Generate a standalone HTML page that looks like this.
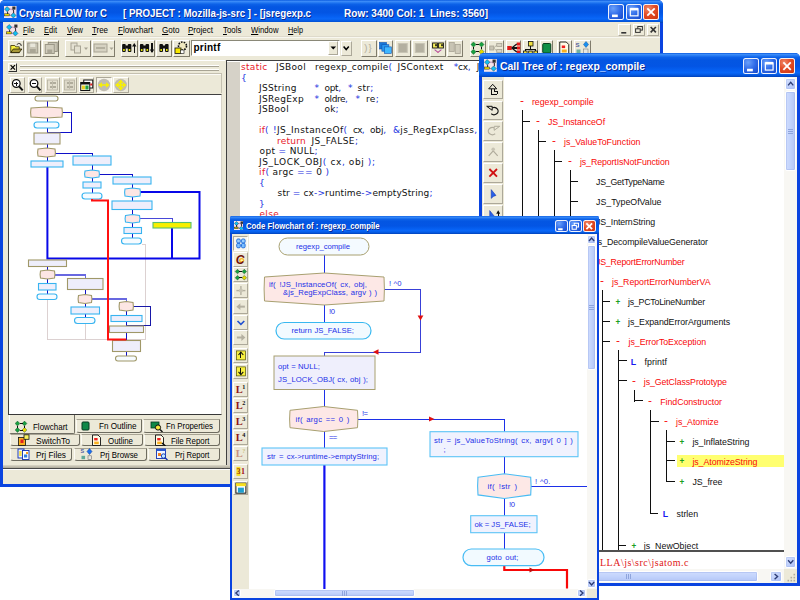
<!DOCTYPE html>
<html><head><meta charset="utf-8"><title>Crystal FLOW for C</title>
<style>
html,body{margin:0;padding:0;background:#fff;}
body{width:800px;height:600px;position:relative;overflow:hidden;font-family:"Liberation Sans",Arial,sans-serif;}
div,span,svg{position:absolute;}
div{box-sizing:border-box;}
span{white-space:pre;}
u{text-decoration:underline;}
</style></head><body>
<div style="left:0px;top:0px;width:663px;height:487px;overflow:hidden;border-radius:5px 5px 0 0;background:#0a44e0;">
<div style="left:0px;top:0px;width:663px;height:22.5px;background:linear-gradient(to bottom,#0a5be0 0%,#3c8cf8 6%,#2a7ef4 10%,#0d62e8 18%,#0456e2 30%,#0355e4 55%,#0660f2 72%,#0a68f8 82%,#0458e0 92%,#0242b8 100%);"></div>
<div style="left:3px;top:22px;width:657px;height:462.2px;background:#ece9d8;"></div>
<svg style="left:4.3px;top:5.8px" width="12.5" height="12.5" viewBox="4.3 5.8 12.5 12.5">
<rect x="4.3" y="5.8" width="12.5" height="12.5" fill="#f4e4ea"/>
<circle cx="11.07" cy="12.05" r="3.12" fill="none" stroke="#c8a0c0" stroke-width="1.2"/>
<polygon points="7.42,6.32 10.03,8.93 7.42,11.53 4.82,8.93" fill="#10c0f0" stroke="#204060" stroke-width="0.5"/>
<polygon points="13.68,12.57 16.28,15.18 13.68,17.78 11.07,15.18" fill="#10c0f0" stroke="#204060" stroke-width="0.5"/>
<rect x="4.82" y="13.61" width="4.69" height="2.08" fill="#f0e000" stroke="#202020" stroke-width="0.5"/>
<rect x="12.63" y="6.32" width="3.12" height="3.12" fill="#303030"/>
<polyline points="7.42,11.53 7.42,13.61" fill="none" stroke="#202020" stroke-width="0.8"  shape-rendering="crispEdges"/>
<polyline points="14.2,9.45 14.2,12.57" fill="none" stroke="#202020" stroke-width="0.8"  shape-rendering="crispEdges"/>
</svg>
<span id="t1" style="left:19px;top:5.8px;font:bold 10.7px/14px 'Liberation Sans',Arial,sans-serif;color:#fff;transform:scaleX(0.8927);transform-origin:0 50%;text-shadow:1px 1px 0 #0a2890;">Crystal FLOW for C</span>
<span id="t2" style="left:122.5px;top:5.8px;font:bold 10.7px/14px 'Liberation Sans',Arial,sans-serif;color:#fff;transform:scaleX(0.9097);transform-origin:0 50%;text-shadow:1px 1px 0 #0a2890;">[ PROJECT : Mozilla-js-src ] - [jsregexp.c</span>
<span id="t3" style="left:344px;top:5.8px;font:bold 10.7px/14px 'Liberation Sans',Arial,sans-serif;color:#fff;transform:scaleX(0.9396);transform-origin:0 50%;text-shadow:1px 1px 0 #0a2890;">Row: 3400 Col: 1  Lines: 3560]</span>
<div style="left:608px;top:4px;width:16px;height:16px;background:radial-gradient(circle at 30% 25%,#6aa0fa 0%,#2f6ae8 50%,#1848c8 100%);border:1px solid rgba(255,255,255,0.92);border-radius:2.5px;"></div>
<svg style="left:608px;top:4px" width="16" height="16" viewBox="608 4 16 16">
<rect x="612" y="14.56" width="5.76" height="2.56" fill="#fff"/>
</svg>
<div style="left:625.5px;top:4px;width:16px;height:16px;background:radial-gradient(circle at 30% 25%,#6aa0fa 0%,#2f6ae8 50%,#1848c8 100%);border:1px solid rgba(255,255,255,0.92);border-radius:2.5px;"></div>
<svg style="left:625.5px;top:4px" width="16" height="16" viewBox="625.5 4 16 16">
<rect x="629.82" y="8.8" width="7.68" height="7.04" fill="none" stroke="#fff" stroke-width="1.2"/>
<rect x="629.82" y="7.84" width="7.68" height="2.56" fill="#fff"/>
</svg>
<div style="left:643px;top:4px;width:16px;height:16px;background:radial-gradient(circle at 30% 25%,#f08868 0%,#e24c26 45%,#cc340e 100%);border:1px solid rgba(255,255,255,0.92);border-radius:2.5px;"></div>
<svg style="left:643px;top:4px" width="16" height="16" viewBox="643 4 16 16">
<polyline points="647.32,8.32 654.68,15.68" fill="none" stroke="#fff" stroke-width="1.8" />
<polyline points="654.68,8.32 647.32,15.68" fill="none" stroke="#fff" stroke-width="1.8" />
</svg>
<svg style="left:6px;top:23.5px" width="12.5" height="12.5" viewBox="6 23.5 12.5 12.5">
<rect x="6" y="23.5" width="12.5" height="12.5" fill="#f4e4ea"/>
<circle cx="12.77" cy="29.75" r="3.12" fill="none" stroke="#c8a0c0" stroke-width="1.2"/>
<polygon points="9.12,24.02 11.73,26.62 9.12,29.23 6.52,26.62" fill="#10c0f0" stroke="#204060" stroke-width="0.5"/>
<polygon points="15.38,30.27 17.98,32.88 15.38,35.48 12.77,32.88" fill="#10c0f0" stroke="#204060" stroke-width="0.5"/>
<rect x="6.52" y="31.31" width="4.69" height="2.08" fill="#f0e000" stroke="#202020" stroke-width="0.5"/>
<rect x="14.33" y="24.02" width="3.12" height="3.12" fill="#303030"/>
<polyline points="9.12,29.23 9.12,31.31" fill="none" stroke="#202020" stroke-width="0.8"  shape-rendering="crispEdges"/>
<polyline points="15.9,27.15 15.9,30.27" fill="none" stroke="#202020" stroke-width="0.8"  shape-rendering="crispEdges"/>
</svg>
<span id="t4" style="left:23px;top:23.5px;font:normal 9.2px/12px 'Liberation Sans',Arial,sans-serif;color:#000;transform:scaleX(0.7756);transform-origin:0 50%;"><u>F</u>ile</span>
<span id="t5" style="left:44px;top:23.5px;font:normal 9.2px/12px 'Liberation Sans',Arial,sans-serif;color:#000;transform:scaleX(0.8197);transform-origin:0 50%;"><u>E</u>dit</span>
<span id="t6" style="left:66.5px;top:23.5px;font:normal 9.2px/12px 'Liberation Sans',Arial,sans-serif;color:#000;transform:scaleX(0.8095);transform-origin:0 50%;"><u>V</u>iew</span>
<span id="t7" style="left:92px;top:23.5px;font:normal 9.2px/12px 'Liberation Sans',Arial,sans-serif;color:#000;transform:scaleX(0.8620);transform-origin:0 50%;"><u>T</u>ree</span>
<span id="t8" style="left:117.5px;top:23.5px;font:normal 9.2px/12px 'Liberation Sans',Arial,sans-serif;color:#000;transform:scaleX(0.8784);transform-origin:0 50%;"><u>F</u>lowchart</span>
<span id="t9" style="left:161.5px;top:23.5px;font:normal 9.2px/12px 'Liberation Sans',Arial,sans-serif;color:#000;transform:scaleX(0.8777);transform-origin:0 50%;"><u>G</u>oto</span>
<span id="t10" style="left:187.5px;top:23.5px;font:normal 9.2px/12px 'Liberation Sans',Arial,sans-serif;color:#000;transform:scaleX(0.8738);transform-origin:0 50%;"><u>P</u>roject</span>
<span id="t11" style="left:222.5px;top:23.5px;font:normal 9.2px/12px 'Liberation Sans',Arial,sans-serif;color:#000;transform:scaleX(0.8530);transform-origin:0 50%;"><u>T</u>ools</span>
<span id="t12" style="left:250.5px;top:23.5px;font:normal 9.2px/12px 'Liberation Sans',Arial,sans-serif;color:#000;transform:scaleX(0.8413);transform-origin:0 50%;"><u>W</u>indow</span>
<span id="t13" style="left:288px;top:23.5px;font:normal 9.2px/12px 'Liberation Sans',Arial,sans-serif;color:#000;transform:scaleX(0.7934);transform-origin:0 50%;"><u>H</u>elp</span>
<div style="left:618px;top:24px;width:12.5px;height:11.5px;background:#ece9d8;border:1px solid;border-color:#fff #aca899 #aca899 #fff;"></div>
<svg style="left:618px;top:24px" width="12.5" height="11.5" viewBox="618 24 12.5 11.5">
<rect x="621.25" y="32" width="5" height="1.6" fill="#333"/>
</svg>
<div style="left:632.5px;top:24px;width:12px;height:11.5px;background:#ece9d8;border:1px solid;border-color:#fff #aca899 #aca899 #fff;"></div>
<svg style="left:632.5px;top:24px" width="12" height="11.5" viewBox="632.5 24 12 11.5">
<rect x="637.3" y="26.5" width="4.6" height="3.6" fill="none" stroke="#333" stroke-width="1"/>
<rect x="635.1" y="28.8" width="4.6" height="3.6" fill="#ece9d8" stroke="#333" stroke-width="1"/>
</svg>
<div style="left:646.5px;top:24px;width:12.5px;height:11.5px;background:#ece9d8;border:1px solid;border-color:#fff #aca899 #aca899 #fff;"></div>
<svg style="left:646.5px;top:24px" width="12.5" height="11.5" viewBox="646.5 24 12.5 11.5">
<polyline points="650.15,27 655.35,32.4" fill="none" stroke="#333" stroke-width="1.6" />
<polyline points="655.35,27 650.15,32.4" fill="none" stroke="#333" stroke-width="1.6" />
</svg>
<div style="left:3px;top:36.4px;width:657px;height:1px;background:#dedacb;"></div>
<div style="left:3px;top:37.2px;width:657px;height:1px;background:#f8f7f0;"></div>
<div style="left:7.5px;top:39.8px;width:16.5px;height:17px;background:#ece9d8;border:1px solid;border-color:#fff #807c6c #807c6c #fff;"></div>
<svg style="left:7.5px;top:39px" width="16.5" height="18" viewBox="7.5 39 16.5 18">
<polygon points="10.25,45.5 14.25,45.5 15.25,46.8 18.75,46.8 18.75,52.6 10.25,52.6" fill="#f8f040" stroke="#302800" stroke-width="0.8"/>
<polygon points="10.25,52.6 12.75,49 21.35,49 18.75,52.6" fill="#a89838" stroke="#201800" stroke-width="0.8"/>
<polyline points="16.25,44.6 18.25,43.4 20.25,44 20.75,46" fill="none" stroke="#202020" stroke-width="0.9" />
</svg>
<div style="left:25px;top:39.8px;width:15.5px;height:17px;background:#ece9d8;border:1px solid;border-color:#fff #807c6c #807c6c #fff;"></div>
<svg style="left:25px;top:39px" width="15.5" height="18" viewBox="25 39 15.5 18">
<rect x="27.75" y="43" width="10" height="10" fill="#c8c4b4" stroke="#9c9888" stroke-width="1"/>
<rect x="30.25" y="43.5" width="5" height="3.5" fill="#e8e6da"/>
<rect x="29.75" y="49" width="6" height="4" fill="#aaa696"/>
</svg>
<div style="left:41.5px;top:39.8px;width:17.5px;height:17px;background:#ece9d8;border:1px solid;border-color:#fff #807c6c #807c6c #fff;"></div>
<svg style="left:41.5px;top:39px" width="17.5" height="18" viewBox="41.5 39 17.5 18">
<rect x="47.75" y="42.5" width="9" height="9" fill="#c8c4b4" stroke="#9c9888" stroke-width="1"/>
<rect x="44.75" y="44.5" width="9" height="9" fill="#d0ccbc" stroke="#9c9888" stroke-width="1"/>
<rect x="46.75" y="49.5" width="5" height="4" fill="#aaa696"/>
</svg>
<div style="left:64.5px;top:39.8px;width:26px;height:17px;background:#ece9d8;border:1px solid;border-color:#fff #807c6c #807c6c #fff;"></div>
<svg style="left:64.5px;top:39px" width="26" height="18" viewBox="64.5 39 26 18">
<rect x="70.5" y="43" width="6" height="7" fill="#e4e1d2" stroke="#a8a494" stroke-width="1"/>
<rect x="74" y="46" width="6" height="7" fill="#e4e1d2" stroke="#a8a494" stroke-width="1"/>
<polygon points="83.5,47.5 87.5,47.5 85.5,50" fill="#a8a494" />
</svg>
<div style="left:91.5px;top:39.8px;width:23px;height:17px;background:#ece9d8;border:1px solid;border-color:#fff #807c6c #807c6c #fff;"></div>
<svg style="left:91.5px;top:39px" width="23" height="18" viewBox="91.5 39 23 18">
<rect x="93.5" y="44" width="13" height="8" fill="#d6d2c2" stroke="#a8a494" stroke-width="1"/>
<polyline points="95.5,48 104.5,48" fill="none" stroke="#a8a494" stroke-width="1.5" />
<polygon points="109,47.5 113,47.5 111,50" fill="#a8a494" />
</svg>
<div style="left:121px;top:39.8px;width:16.5px;height:17px;background:#ece9d8;border:1px solid;border-color:#fff #807c6c #807c6c #fff;"></div>
<svg style="left:121px;top:39px" width="16.5" height="18" viewBox="121 39 16.5 18">
<rect x="122.15" y="44" width="3.6" height="8" rx="1" fill="#101010"/>
<rect x="127.75" y="44" width="3.6" height="8" rx="1" fill="#101010"/>
<rect x="125.25" y="45.5" width="3" height="3" fill="#101010"/>
<rect x="123.15" y="49" width="1.6" height="2" fill="#e0e000"/>
<rect x="128.75" y="49" width="1.6" height="2" fill="#e0e000"/>
<polyline points="134.25,53 134.25,44" fill="none" stroke="#101010" stroke-width="1.2"  shape-rendering="crispEdges"/>
<polygon points="132.05,46.5 134.25,43 136.45,46.5" fill="#101010" />
</svg>
<div style="left:138.5px;top:39.8px;width:16px;height:17px;background:#ece9d8;border:1px solid;border-color:#fff #807c6c #807c6c #fff;"></div>
<svg style="left:138.5px;top:39px" width="16" height="18" viewBox="138.5 39 16 18">
<rect x="139.4" y="44" width="3.6" height="8" rx="1" fill="#101010"/>
<rect x="145" y="44" width="3.6" height="8" rx="1" fill="#101010"/>
<rect x="142.5" y="45.5" width="3" height="3" fill="#101010"/>
<rect x="140.4" y="49" width="1.6" height="2" fill="#e0e000"/>
<rect x="146" y="49" width="1.6" height="2" fill="#e0e000"/>
<polyline points="151.5,43 151.5,52" fill="none" stroke="#101010" stroke-width="1.2"  shape-rendering="crispEdges"/>
<polygon points="149.3,49.5 151.5,53 153.7,49.5" fill="#101010" />
</svg>
<div style="left:155.5px;top:39.8px;width:16px;height:17px;background:#ece9d8;border:1px solid;border-color:#fff #807c6c #807c6c #fff;"></div>
<svg style="left:155.5px;top:39px" width="16" height="18" viewBox="155.5 39 16 18">
<rect x="158.9" y="44" width="3.6" height="8" rx="1" fill="#101010"/>
<rect x="164.5" y="44" width="3.6" height="8" rx="1" fill="#101010"/>
<rect x="162" y="45.5" width="3" height="3" fill="#101010"/>
<rect x="159.9" y="49" width="1.6" height="2" fill="#e0e000"/>
<rect x="165.5" y="49" width="1.6" height="2" fill="#e0e000"/>
</svg>
<div style="left:172.5px;top:39.8px;width:17px;height:17px;background:#ece9d8;border:1px solid;border-color:#fff #807c6c #807c6c #fff;"></div>
<svg style="left:172.5px;top:39px" width="17" height="18" viewBox="172.5 39 17 18">
<circle cx="182" cy="46" r="4" fill="#f0e8c0" stroke="#101010" stroke-width="1.6" stroke-dasharray="1.6 1.2"/>
<rect x="174.5" y="48" width="6" height="5.5" fill="#f8e800" stroke="#101010" stroke-width="0.8"/>
<rect x="180" y="50" width="3.5" height="3.5" fill="#fff" stroke="#101010" stroke-width="0.6"/>
</svg>
<div style="left:191px;top:39.5px;width:148.5px;height:16.5px;background:#fff;border:1px solid;border-color:#8a8878 #fff #fff #8a8878;"></div>
<span id="t14" style="left:193.5px;top:41.3px;font:bold 10px/13px 'Liberation Sans',Arial,sans-serif;color:#000;letter-spacing:0.24px;">printf</span>
<div style="left:327.5px;top:41px;width:10.5px;height:13.5px;background:#ece9d8;border:1px solid;border-color:#fff #aca899 #aca899 #fff;"></div>
<svg style="left:327.5px;top:41px" width="11" height="14" viewBox="327.5 41 11 14">
<polygon points="330,46.5 335.6,46.5 332.8,49.6" fill="#000" />
</svg>
<div style="left:341px;top:40.5px;width:10.5px;height:15px;background:#ece9d8;border:1px solid;border-color:#fff #aca899 #aca899 #fff;"></div>
<svg style="left:341px;top:40px" width="11" height="16" viewBox="341 40 11 16">
<polyline points="343.6,46.5 346.2,49.6 348.8,46.5" fill="none" stroke="#000" stroke-width="1.5" />
</svg>
<div style="left:361px;top:39.8px;width:15.5px;height:17px;background:#ece9d8;border:1px solid;border-color:#fff #807c6c #807c6c #fff;"></div>
<svg style="left:361px;top:39px" width="15.5" height="18" viewBox="361 39 15.5 18">
</svg>
<span id="t15" style="left:364.2px;top:42px;font:normal 9.5px/12px 'Liberation Sans',Arial,sans-serif;color:#b0ac9c;letter-spacing:1.08px;">)}</span>
<div style="left:378px;top:39.8px;width:15px;height:17px;background:#ece9d8;border:1px solid;border-color:#fff #807c6c #807c6c #fff;"></div>
<svg style="left:378px;top:39px" width="15" height="18" viewBox="378 39 15 18">
<rect x="379.5" y="42.5" width="7" height="6.5" fill="#1878d8" stroke="#1050b0" stroke-width="0.6"/>
<rect x="381.9" y="44.7" width="7" height="6.5" fill="#2898f0" stroke="#1050b0" stroke-width="0.6"/>
<rect x="384.3" y="46.9" width="7" height="6.5" fill="#40b8ff" stroke="#1050b0" stroke-width="0.6"/>
</svg>
<div style="left:395px;top:39.8px;width:15.5px;height:17px;background:#ece9d8;border:1px solid;border-color:#fff #807c6c #807c6c #fff;"></div>
<svg style="left:395px;top:39px" width="15.5" height="18" viewBox="395 39 15.5 18">
<rect x="398.25" y="43.5" width="9" height="9" fill="#b4b0a0" stroke="#c8c4b4" stroke-width="1"/>
</svg>
<div style="left:412px;top:39.8px;width:15.5px;height:17px;background:#ece9d8;border:1px solid;border-color:#fff #807c6c #807c6c #fff;"></div>
<svg style="left:412px;top:39px" width="15.5" height="18" viewBox="412 39 15.5 18">
<rect x="415.25" y="43.5" width="9" height="9" fill="#b4b0a0" stroke="#c8c4b4" stroke-width="1"/>
</svg>
<div style="left:429.5px;top:39.8px;width:16px;height:17px;background:#ece9d8;border:1px solid;border-color:#fff #807c6c #807c6c #fff;"></div>
<svg style="left:429.5px;top:39px" width="16" height="18" viewBox="429.5 39 16 18">
<rect x="432.1" y="43" width="4.8" height="5" fill="#f8f060" stroke="#101010" stroke-width="0.9"/>
<rect x="434.7" y="44.2" width="1.6" height="2" fill="#101010"/>
<rect x="438.1" y="43" width="4.8" height="5" fill="#f8f060" stroke="#101010" stroke-width="0.9"/>
<rect x="440.7" y="44.2" width="1.6" height="2" fill="#101010"/>
<polyline points="434.1,49.6 437.5,52.4 440.9,49.6" fill="none" stroke="#b050a0" stroke-width="1.1" />
<rect x="436.5" y="51.4" width="2" height="1.4" fill="#d070a0"/>
</svg>
<div style="left:447px;top:39.8px;width:15.5px;height:17px;background:#ece9d8;border:1px solid;border-color:#fff #807c6c #807c6c #fff;"></div>
<svg style="left:447px;top:39px" width="15.5" height="18" viewBox="447 39 15.5 18">
<rect x="449.25" y="42.5" width="5" height="9" fill="#c8c4b4" stroke="#a8a494" stroke-width="0.8"/>
<rect x="455.25" y="44.5" width="5" height="9" fill="#d0ccbc" stroke="#a8a494" stroke-width="0.8"/>
</svg>
<div style="left:470px;top:39.8px;width:16px;height:17px;background:#ece9d8;border:1px solid;border-color:#fff #807c6c #807c6c #fff;"></div>
<svg style="left:470px;top:39px" width="16" height="18" viewBox="470 39 16 18">
<polygon points="473.5,41.9 476.1,44.5 473.5,47.1 470.9,44.5" fill="#18a040" stroke="#0a5020" stroke-width="0.4"/>
<polygon points="481.5,41.9 484.1,44.5 481.5,47.1 478.9,44.5" fill="#18a040" stroke="#0a5020" stroke-width="0.4"/>
<polygon points="473.5,49.2 476.1,51.8 473.5,54.4 470.9,51.8" fill="#18a040" stroke="#0a5020" stroke-width="0.4"/>
<polygon points="481.5,49.2 484.1,51.8 481.5,54.4 478.9,51.8" fill="#e8d800" stroke="#0a5020" stroke-width="0.4"/>
<polyline points="476,44.5 479,44.5" fill="none" stroke="#101010" stroke-width="1"  shape-rendering="crispEdges"/>
<polyline points="476,51.8 479,51.8" fill="none" stroke="#101010" stroke-width="1"  shape-rendering="crispEdges"/>
<polyline points="473.5,46.8 473.5,49.2" fill="none" stroke="#101010" stroke-width="1"  shape-rendering="crispEdges"/>
<polyline points="481.5,46.8 481.5,49.2" fill="none" stroke="#101010" stroke-width="1"  shape-rendering="crispEdges"/>
</svg>
<div style="left:488px;top:39.8px;width:15.5px;height:17px;background:#ece9d8;border:1px solid;border-color:#fff #807c6c #807c6c #fff;"></div>
<svg style="left:488px;top:39px" width="15.5" height="18" viewBox="488 39 15.5 18">
<rect x="489.75" y="46" width="4" height="4" fill="#c8c4b4" stroke="#a8a494" stroke-width="0.8"/>
<rect x="496.75" y="43.5" width="5" height="3" fill="#d8d4c4" stroke="#a8a494" stroke-width="0.8"/>
<rect x="496.75" y="49.5" width="5" height="3" fill="#d8d4c4" stroke="#a8a494" stroke-width="0.8"/>
<polyline points="493.75,48 496.75,45" fill="none" stroke="#a8a494" stroke-width="0.8" />
<polyline points="493.75,48 496.75,51" fill="none" stroke="#a8a494" stroke-width="0.8" />
</svg>
<div style="left:505.5px;top:39.8px;width:15.5px;height:17px;background:#ece9d8;border:1px solid;border-color:#fff #807c6c #807c6c #fff;"></div>
<svg style="left:505.5px;top:39px" width="15.5" height="18" viewBox="505.5 39 15.5 18">
<rect x="506.75" y="46" width="4.5" height="4" fill="#e01818"/>
<rect x="516.25" y="42.5" width="3.5" height="3" fill="#e01818"/>
<polyline points="511.25,48 516.25,44" fill="none" stroke="#101010" stroke-width="1.2" />
<rect x="516.25" y="46.5" width="3.5" height="3" fill="#e01818"/>
<polyline points="511.25,48 516.25,48" fill="none" stroke="#101010" stroke-width="1.2"  shape-rendering="crispEdges"/>
<rect x="516.25" y="50.5" width="3.5" height="3" fill="#e01818"/>
<polyline points="511.25,48 516.25,52" fill="none" stroke="#101010" stroke-width="1.2" />
</svg>
<div style="left:523px;top:39.8px;width:15px;height:17px;background:#ece9d8;border:1px solid;border-color:#fff #807c6c #807c6c #fff;"></div>
<svg style="left:523px;top:39px" width="15" height="18" viewBox="523 39 15 18">
<rect x="528.5" y="41.5" width="4.5" height="4.5" fill="#f0e040" stroke="#101010" stroke-width="0.8"/>
<polyline points="530.5,46 530.5,49" fill="none" stroke="#101010" stroke-width="1"  shape-rendering="crispEdges"/>
<polyline points="525.5,52 525.5,49 535.5,49 535.5,52" fill="none" stroke="#101010" stroke-width="1"  shape-rendering="crispEdges"/>
<rect x="523.5" y="51" width="3.6" height="3.6" fill="#f0e040" stroke="#101010" stroke-width="0.8"/>
<rect x="528.7" y="51" width="3.6" height="3.6" fill="#f0e040" stroke="#101010" stroke-width="0.8"/>
<rect x="533.9" y="51" width="3.6" height="3.6" fill="#f0e040" stroke="#101010" stroke-width="0.8"/>
</svg>
<div style="left:539.5px;top:39.8px;width:13.5px;height:17px;background:#ece9d8;border:1px solid;border-color:#fff #807c6c #807c6c #fff;"></div>
<svg style="left:539.5px;top:39px" width="13.5" height="18" viewBox="539.5 39 13.5 18">
<rect x="542.25" y="43.5" width="8" height="9.5" rx="1" fill="#109048" stroke="#084020" stroke-width="1"/>
</svg>
<div style="left:557px;top:39.8px;width:14.5px;height:17px;background:#ece9d8;border:1px solid;border-color:#fff #807c6c #807c6c #fff;"></div>
<svg style="left:557px;top:39px" width="14.5" height="18" viewBox="557 39 14.5 18">
<polygon points="559.75,42 566.25,42 568.75,44.5 568.75,54 559.75,54" fill="#fffce8" stroke="#101010" stroke-width="0.9"/>
<rect x="561.75" y="45.5" width="3.4" height="2.6" fill="#f02020"/>
<rect x="561.75" y="49.5" width="5" height="3" fill="#f8b020"/>
</svg>
<div style="left:573.5px;top:39.8px;width:17px;height:17px;background:#ece9d8;border:1px solid;border-color:#fff #807c6c #807c6c #fff;"></div>
<svg style="left:573.5px;top:39px" width="17" height="18" viewBox="573.5 39 17 18">
</svg>
<span id="t16" style="left:575.5px;top:40.5px;font:bold 6px/8px 'Liberation Sans',Arial,sans-serif;color:#5060a0;">S</span>
<svg style="left:573.5px;top:39px" width="17" height="18" viewBox="573.5 39 17 18">
<polygon points="585.5,41.5 588,44.5 585.5,47.5 583,44.5" fill="#1890f0" stroke="#1050a0" stroke-width="0.5"/>
<rect x="576" y="49.5" width="4" height="3.5" fill="#70b0a0"/>
<rect x="583" y="49" width="4.5" height="4.5" fill="#e8e8e0" stroke="#808080" stroke-width="0.6"/>
</svg>
<div style="left:3px;top:59.6px;width:222px;height:1px;background:#d0ccbc;"></div>
<div style="left:3px;top:60.4px;width:222px;height:1px;background:#fff;"></div>
<div style="left:8px;top:63.2px;width:9.2px;height:8.4px;background:#ece9d8;border:1px solid;border-color:#fff #303030 #303030 #fff;"></div>
<svg style="left:8px;top:63px" width="10" height="9" viewBox="8 63 10 9">
<polyline points="10.6,65.2 15,69.6" fill="none" stroke="#000" stroke-width="1.2" />
<polyline points="15,65.2 10.6,69.6" fill="none" stroke="#000" stroke-width="1.2" />
</svg>
<div style="left:19.5px;top:65px;width:199.3px;height:1px;background:#fff;"></div>
<div style="left:19.5px;top:66px;width:199.3px;height:1px;background:#a8a494;"></div>
<div style="left:19.5px;top:68.5px;width:199.3px;height:1px;background:#fff;"></div>
<div style="left:19.5px;top:69.5px;width:199.3px;height:1px;background:#a8a494;"></div>
<div style="left:8px;top:73px;width:212.5px;height:1px;background:#c4c0b0;"></div>
<div style="left:8px;top:74px;width:212.5px;height:1px;background:#fbfaf6;"></div>
<div style="left:220.5px;top:73px;width:1px;height:20px;background:#c4c0b0;"></div>
<div style="left:10px;top:77px;width:15px;height:16px;background:#ece9d8;border:1px solid;border-color:#fff #aca899 #aca899 #fff;"></div>
<svg style="left:10px;top:77px" width="15" height="16" viewBox="10 77 15 16">
<circle cx="16.3" cy="83.5" r="3.8" fill="#fff" stroke="#101010" stroke-width="1.3"/>
<polyline points="19.1,86.4 22.7,90.4" fill="none" stroke="#101010" stroke-width="2" />
<polyline points="14.3,83.5 18.3,83.5" fill="none" stroke="#101010" stroke-width="1.2"  shape-rendering="crispEdges"/>
<polyline points="16.3,81.5 16.3,85.5" fill="none" stroke="#101010" stroke-width="1.2"  shape-rendering="crispEdges"/>
</svg>
<div style="left:27.5px;top:77px;width:14.5px;height:16px;background:#ece9d8;border:1px solid;border-color:#fff #aca899 #aca899 #fff;"></div>
<svg style="left:27.5px;top:77px" width="14.5" height="16" viewBox="27.5 77 14.5 16">
<circle cx="33.55" cy="83.5" r="3.8" fill="#fff" stroke="#101010" stroke-width="1.3"/>
<polyline points="36.35,86.4 39.95,90.4" fill="none" stroke="#101010" stroke-width="2" />
<polyline points="31.55,83.5 35.55,83.5" fill="none" stroke="#101010" stroke-width="1.2"  shape-rendering="crispEdges"/>
</svg>
<div style="left:44.5px;top:77px;width:15px;height:16px;background:#ece9d8;border:1px solid;border-color:#fff #aca899 #aca899 #fff;"></div>
<svg style="left:44.5px;top:77px" width="15" height="16" viewBox="44.5 77 15 16">
<rect x="47" y="80" width="10" height="10" fill="#e4e0d0" stroke="#b4b0a0" stroke-width="0.8"/>
<polyline points="49,83 55,83" fill="none" stroke="#b0ac9c" stroke-width="1.2"  shape-rendering="crispEdges"/>
<polyline points="49,87 55,87" fill="none" stroke="#b0ac9c" stroke-width="1.2"  shape-rendering="crispEdges"/>
<polyline points="52,81 52,89" fill="none" stroke="#c0bcac" stroke-width="1"  shape-rendering="crispEdges"/>
</svg>
<div style="left:61.5px;top:77px;width:15px;height:16px;background:#ece9d8;border:1px solid;border-color:#fff #aca899 #aca899 #fff;"></div>
<svg style="left:61.5px;top:77px" width="15" height="16" viewBox="61.5 77 15 16">
<rect x="64" y="80" width="10" height="10" fill="#dcd8c8" stroke="#b4b0a0" stroke-width="0.8"/>
<polyline points="66,83 72,83" fill="none" stroke="#b0ac9c" stroke-width="1.2"  shape-rendering="crispEdges"/>
<polyline points="66,87 72,87" fill="none" stroke="#b0ac9c" stroke-width="1.2"  shape-rendering="crispEdges"/>
<polyline points="69,81 69,89" fill="none" stroke="#c0bcac" stroke-width="1"  shape-rendering="crispEdges"/>
</svg>
<div style="left:78.5px;top:77px;width:15.5px;height:16px;background:#ece9d8;border:1px solid;border-color:#fff #aca899 #aca899 #fff;"></div>
<svg style="left:78.5px;top:77px" width="15.5" height="16" viewBox="78.5 77 15.5 16">
<rect x="83.25" y="80" width="9" height="8" fill="#fff" stroke="#101010" stroke-width="1"/>
<rect x="80.25" y="82.5" width="9" height="8" fill="#fff" stroke="#101010" stroke-width="1"/>
<rect x="80.25" y="82.5" width="9" height="2" fill="#101010"/>
<rect x="81.25" y="85.5" width="3.2" height="4" fill="#e8d020"/>
<rect x="84.85" y="85.5" width="3.2" height="4" fill="#20a040"/>
<rect x="89.75" y="83.5" width="2" height="2" fill="#e02020"/>
</svg>
<div style="left:95.5px;top:77px;width:16px;height:16px;background:#f6f4ea;border:1px solid;border-color:#aca899 #fff #fff #aca899;"></div>
<svg style="left:95.5px;top:77px" width="16" height="16" viewBox="95.5 77 16 16">
<circle cx="103.5" cy="85" r="6.2" fill="#c0bcb0"/>
<polygon points="97.9,85 101.3,82.2 101.3,87.8" fill="#f8f000" />
<polygon points="109.1,85 105.7,82.2 105.7,87.8" fill="#f8f000" />
<polyline points="100.5,85 106.5,85" fill="none" stroke="#f8f000" stroke-width="1.6" />
</svg>
<div style="left:113px;top:77px;width:15.5px;height:16px;background:#ece9d8;border:1px solid;border-color:#fff #aca899 #aca899 #fff;"></div>
<svg style="left:113px;top:77px" width="15.5" height="16" viewBox="113 77 15.5 16">
<circle cx="120.75" cy="85" r="6.2" fill="#c0bcb0"/>
<polygon points="115.15,85 118.55,82.2 118.55,87.8" fill="#f8f000" />
<polygon points="126.35,85 122.95,82.2 122.95,87.8" fill="#f8f000" />
<polyline points="117.75,85 123.75,85" fill="none" stroke="#f8f000" stroke-width="1.6" />
<polygon points="120.75,79.4 117.95,82.8 123.55,82.8" fill="#f8f000" />
<polygon points="120.75,90.6 117.95,87.2 123.55,87.2" fill="#f8f000" />
<polyline points="120.75,82 120.75,88" fill="none" stroke="#f8f000" stroke-width="1.6" />
</svg>
<div style="left:8px;top:94px;width:213.5px;height:321px;background:#fff;border:1px solid;border-color:#404040 #d8d4c8 #383838 #404040;"></div>
<svg style="left:9px;top:95px" width="211.5" height="319" viewBox="9 95 211.5 319">
<polyline points="141.5,244 145,244 145,339.5 126,339.5" fill="none" stroke="#d8cccc" stroke-width="0.9"  shape-rendering="crispEdges"/>
<polyline points="47.4,299.5 47.4,339.5 108,339.5" fill="none" stroke="#d8cccc" stroke-width="0.9"  shape-rendering="crispEdges"/>
<polyline points="85,323.5 85,339.5" fill="none" stroke="#d8cccc" stroke-width="0.9"  shape-rendering="crispEdges"/>
<polyline points="47,101 47,107" fill="none" stroke="#1010c8" stroke-width="1"  shape-rendering="crispEdges"/>
<polyline points="47,118 47,122" fill="none" stroke="#1010c8" stroke-width="1"  shape-rendering="crispEdges"/>
<polyline points="62,112.5 71.5,112.5 71.5,132 47,132" fill="none" stroke="#1010c8" stroke-width="1"  shape-rendering="crispEdges"/>
<polyline points="47,128 47,133" fill="none" stroke="#1010c8" stroke-width="1"  shape-rendering="crispEdges"/>
<polyline points="47,144 47,148" fill="none" stroke="#1010c8" stroke-width="1"  shape-rendering="crispEdges"/>
<polyline points="47,157 47,161" fill="none" stroke="#1010c8" stroke-width="1"  shape-rendering="crispEdges"/>
<polyline points="55,153 92,153 92,156" fill="none" stroke="#1010c8" stroke-width="1"  shape-rendering="crispEdges"/>
<polyline points="92,165 92,170" fill="none" stroke="#1010c8" stroke-width="1"  shape-rendering="crispEdges"/>
<polyline points="92,178 92,182" fill="none" stroke="#1010c8" stroke-width="1"  shape-rendering="crispEdges"/>
<polyline points="92,188 92,193" fill="none" stroke="#1010c8" stroke-width="1"  shape-rendering="crispEdges"/>
<polyline points="99,174.5 132.5,174.5 132.5,177" fill="none" stroke="#1010c8" stroke-width="1"  shape-rendering="crispEdges"/>
<polyline points="132.5,184 132.5,188" fill="none" stroke="#1010c8" stroke-width="1"  shape-rendering="crispEdges"/>
<polyline points="132.5,197 132.5,201" fill="none" stroke="#1010c8" stroke-width="1"  shape-rendering="crispEdges"/>
<polyline points="132.5,209.5 132.5,214.5" fill="none" stroke="#1010c8" stroke-width="1"  shape-rendering="crispEdges"/>
<polyline points="132.5,223 132.5,227.5" fill="none" stroke="#1010c8" stroke-width="1"  shape-rendering="crispEdges"/>
<polyline points="132.5,233.5 132.5,238" fill="none" stroke="#1010c8" stroke-width="1"  shape-rendering="crispEdges"/>
<polyline points="47.4,266.5 47.4,270" fill="none" stroke="#1010c8" stroke-width="1"  shape-rendering="crispEdges"/>
<polyline points="47.4,279 47.4,283.5" fill="none" stroke="#1010c8" stroke-width="1"  shape-rendering="crispEdges"/>
<polyline points="47.4,290 47.4,294" fill="none" stroke="#1010c8" stroke-width="1"  shape-rendering="crispEdges"/>
<polyline points="85,289.5 85,294.5" fill="none" stroke="#1010c8" stroke-width="1"  shape-rendering="crispEdges"/>
<polyline points="85,303.5 85,307" fill="none" stroke="#1010c8" stroke-width="1"  shape-rendering="crispEdges"/>
<polyline points="85,314 85,317.5" fill="none" stroke="#1010c8" stroke-width="1"  shape-rendering="crispEdges"/>
<polyline points="126.3,311 126.3,315.5" fill="none" stroke="#1010c8" stroke-width="1"  shape-rendering="crispEdges"/>
<polyline points="126.3,321.5 126.3,326" fill="none" stroke="#1010c8" stroke-width="1"  shape-rendering="crispEdges"/>
<polyline points="126.3,332.5 126.3,340.5" fill="none" stroke="#1010c8" stroke-width="1"  shape-rendering="crispEdges"/>
<polyline points="126.3,351.5 126.3,356" fill="none" stroke="#1010c8" stroke-width="1"  shape-rendering="crispEdges"/>
<polyline points="139.5,218.5 172,218.5 172,222.5" fill="none" stroke="#4848d8" stroke-width="1"  shape-rendering="crispEdges"/>
<polyline points="54.5,275 85.5,275 85.5,278.5" fill="none" stroke="#6868e0" stroke-width="1.2"  shape-rendering="crispEdges"/>
<polyline points="91.5,299 126.3,299 126.3,301.5" fill="none" stroke="#6868e0" stroke-width="1.2"  shape-rendering="crispEdges"/>
<polyline points="133,306 150,306 150,325 126.5,325" fill="none" stroke="#1818a8" stroke-width="1"  shape-rendering="crispEdges"/>
<polyline points="47.4,167 47.4,258.5 199.5,258.5 199.5,192 140,192" fill="none" stroke="#0808e8" stroke-width="2" />
<polyline points="172,228 172,258.5" fill="none" stroke="#0808e8" stroke-width="2" />
<rect x="35" y="96" width="23" height="5" rx="2.5" fill="#f6fbff" stroke="#a09868" stroke-width="1.1"/>
<polygon points="31,108 46.5,107 62,108 62.4,112.5 62,117 46.5,118 31,117 30.6,112.5" fill="#fde6e4" stroke="#a09868" stroke-width="1.1"/>
<rect x="34" y="122" width="25" height="6" rx="3" fill="#f6fbff" stroke="#38b4f0" stroke-width="1.1"/>
<rect x="34" y="133" width="26" height="11" rx="0" fill="#eeeefb" stroke="#a09868" stroke-width="1.1"/>
<polygon points="38,149 46.5,148 55,149 55.4,152.5 55,156 46.5,157 38,156 37.6,152.5" fill="#fde6e4" stroke="#a09868" stroke-width="1.1"/>
<rect x="31" y="161" width="32" height="6" rx="0" fill="#eeeefb" stroke="#38b4f0" stroke-width="1.1"/>
<rect x="73" y="156" width="38" height="9" rx="0" fill="#eeeefb" stroke="#38b4f0" stroke-width="1.1"/>
<polygon points="85,171 92,170 99,171 99.4,174 99,177 92,178 85,177 84.6,174" fill="#fde6e4" stroke="#38b4f0" stroke-width="1.1"/>
<rect x="113" y="177" width="38" height="7" rx="0" fill="#eeeefb" stroke="#38b4f0" stroke-width="1.1"/>
<rect x="83" y="182" width="18" height="6" rx="0" fill="#eeeefb" stroke="#38b4f0" stroke-width="1.1"/>
<polygon points="125,189 132.5,188 140,189 140.4,192.5 140,196 132.5,197 125,196 124.6,192.5" fill="#fde6e4" stroke="#38b4f0" stroke-width="1.1"/>
<rect x="82" y="193" width="20" height="6" rx="3" fill="#f6fbff" stroke="#38b4f0" stroke-width="1.1"/>
<rect x="112" y="201" width="40" height="8.5" rx="0" fill="#eeeefb" stroke="#38b4f0" stroke-width="1.1"/>
<polygon points="125.5,215.5 132.5,214.5 139.5,215.5 139.9,218.75 139.5,222 132.5,223 125.5,222 125.1,218.75" fill="#fde6e4" stroke="#38b4f0" stroke-width="1.1"/>
<rect x="153" y="222.5" width="38" height="5.5" rx="0" fill="#f8f000" stroke="#58c070" stroke-width="1.1"/>
<rect x="124" y="227.5" width="17.5" height="6" rx="0" fill="#eeeefb" stroke="#38b4f0" stroke-width="1.1"/>
<rect x="121.5" y="238" width="20" height="6" rx="3" fill="#f6fbff" stroke="#38b4f0" stroke-width="1.1"/>
<rect x="28.5" y="260" width="38" height="6.5" rx="0" fill="#eeeefb" stroke="#a09868" stroke-width="1.1"/>
<polygon points="40.5,271 47.5,270 54.5,271 54.9,274.5 54.5,278 47.5,279 40.5,278 40.1,274.5" fill="#fde6e4" stroke="#a09868" stroke-width="1.1"/>
<rect x="67.5" y="278.5" width="35.5" height="11" rx="0" fill="#eeeefb" stroke="#a09868" stroke-width="1.1"/>
<rect x="38.5" y="283.5" width="17.5" height="6.5" rx="0" fill="#eeeefb" stroke="#38b4f0" stroke-width="1.1"/>
<rect x="37" y="294" width="20" height="5.5" rx="2.75" fill="#f6fbff" stroke="#38b4f0" stroke-width="1.1"/>
<polygon points="78.5,295.5 85,294.5 91.5,295.5 91.9,299 91.5,302.5 85,303.5 78.5,302.5 78.1,299" fill="#fde6e4" stroke="#a09868" stroke-width="1.1"/>
<polygon points="119.5,302.5 126.25,301.5 133,302.5 133.4,306.25 133,310 126.25,311 119.5,310 119.1,306.25" fill="#fde6e4" stroke="#a09868" stroke-width="1.1"/>
<rect x="71" y="307" width="28.5" height="7" rx="0" fill="#eeeefb" stroke="#38b4f0" stroke-width="1.1"/>
<rect x="74.5" y="317.5" width="20.5" height="6" rx="3" fill="#f6fbff" stroke="#38b4f0" stroke-width="1.1"/>
<rect x="111" y="315.5" width="31" height="6" rx="0" fill="#eeeefb" stroke="#38b4f0" stroke-width="1.1"/>
<rect x="109.5" y="326" width="34" height="6.5" rx="0" fill="#eeeefb" stroke="#a09868" stroke-width="1.1"/>
<rect x="112.5" y="340.5" width="28" height="11" rx="0" fill="#eeeefb" stroke="#a09868" stroke-width="1.1"/>
<rect x="115.5" y="356" width="21" height="5" rx="2.5" fill="#f6fbff" stroke="#a09868" stroke-width="1.1"/>
<polyline points="92,199 92,200.5 108,200.5 108,339.5 126.3,339.5" fill="none" stroke="#ff1010" stroke-width="2" />
</svg>
<div style="left:76.2px;top:418.8px;width:65.8px;height:13.8px;background:#ece9d8;border:1px solid;border-color:#a8a494 #6e6c60 #6e6c60 #fbfaf4;border-radius:1px 1px 3px 3px;"></div>
<span id="t17" style="left:98.5px;top:419.4px;font:normal 9.8px/13px 'Liberation Sans',Arial,sans-serif;color:#000;transform:scaleX(0.8296);transform-origin:0 50%;">Fn Outline</span>
<svg style="left:79px;top:419.6px" width="13" height="12" viewBox="79 419.6 13 12">
<rect x="82" y="421.6" width="7" height="8" rx="1" fill="#108848" stroke="#083820" stroke-width="1"/>
</svg>
<div style="left:143px;top:418.8px;width:77px;height:13.8px;background:#ece9d8;border:1px solid;border-color:#a8a494 #6e6c60 #6e6c60 #fbfaf4;border-radius:1px 1px 3px 3px;"></div>
<span id="t18" style="left:166px;top:419.4px;font:normal 9.8px/13px 'Liberation Sans',Arial,sans-serif;color:#000;transform:scaleX(0.7991);transform-origin:0 50%;">Fn Properties</span>
<svg style="left:150px;top:419.6px" width="13" height="12" viewBox="150 419.6 13 12">
<rect x="151" y="421.6" width="8" height="6" fill="#108848" stroke="#083820" stroke-width="0.8"/>
<circle cx="158" cy="427.1" r="2.6" fill="#f8e840" stroke="#101010" stroke-width="1"/>
<polyline points="160,429.1 162.5,431.6" fill="none" stroke="#101010" stroke-width="1.4" />
</svg>
<div style="left:8.6px;top:414.5px;width:66.8px;height:19.1px;background:#ece9d8;border:1px solid;border-color:#ece9d8 #716f64 #716f64 #fff;border-top:none;border-radius:0 0 2px 2px;"></div>
<span id="t19" style="left:32.5px;top:420.15px;font:normal 9.8px/13px 'Liberation Sans',Arial,sans-serif;color:#000;transform:scaleX(0.8124);transform-origin:0 50%;">Flowchart</span>
<svg style="left:15px;top:421px" width="13" height="12" viewBox="15 421 13 12">
<polygon points="17.5,421.1 19.9,423.5 17.5,425.9 15.1,423.5" fill="#18a040" stroke="#0a4018" stroke-width="0.4"/>
<polygon points="24.5,421.1 26.9,423.5 24.5,425.9 22.1,423.5" fill="#18a040" stroke="#0a4018" stroke-width="0.4"/>
<polygon points="17.5,427.6 19.9,430 17.5,432.4 15.1,430" fill="#18a040" stroke="#0a4018" stroke-width="0.4"/>
<polygon points="24.5,427.6 26.9,430 24.5,432.4 22.1,430" fill="#e8d800" stroke="#0a4018" stroke-width="0.4"/>
<polyline points="19.5,423.5 22.5,423.5" fill="none" stroke="#101010" stroke-width="1"  shape-rendering="crispEdges"/>
<polyline points="19.5,430 22.5,430" fill="none" stroke="#101010" stroke-width="1"  shape-rendering="crispEdges"/>
<polyline points="17.5,425.8 17.5,427.8" fill="none" stroke="#101010" stroke-width="1"  shape-rendering="crispEdges"/>
<polyline points="24.5,425.8 24.5,427.8" fill="none" stroke="#101010" stroke-width="1"  shape-rendering="crispEdges"/>
</svg>
<div style="left:10px;top:433.8px;width:70px;height:12.6px;background:#ece9d8;border:1px solid;border-color:#a8a494 #6e6c60 #6e6c60 #fbfaf4;border-radius:1px 1px 3px 3px;"></div>
<span id="t20" style="left:36px;top:433.8px;font:normal 9.8px/13px 'Liberation Sans',Arial,sans-serif;color:#000;transform:scaleX(0.8673);transform-origin:0 50%;">SwitchTo</span>
<svg style="left:17px;top:434.2px" width="13" height="12" viewBox="17 434.2 13 12">
<rect x="18.5" y="437.7" width="7" height="8" fill="#f8b020" stroke="#101010" stroke-width="0.8"/>
<rect x="24" y="435" width="5" height="4.5" fill="#f8f060" stroke="#101010" stroke-width="0.8"/>
<rect x="20.5" y="439.7" width="3" height="3.5" fill="#e02020"/>
</svg>
<div style="left:81px;top:433.8px;width:62.2px;height:12.6px;background:#ece9d8;border:1px solid;border-color:#a8a494 #6e6c60 #6e6c60 #fbfaf4;border-radius:1px 1px 3px 3px;"></div>
<span id="t21" style="left:108px;top:433.8px;font:normal 9.8px/13px 'Liberation Sans',Arial,sans-serif;color:#000;transform:scaleX(0.8052);transform-origin:0 50%;">Outline</span>
<svg style="left:90px;top:434.2px" width="13" height="12" viewBox="90 434.2 13 12">
<polygon points="92.5,435.2 98,435.2 100.5,437.7 100.5,445.7 92.5,445.7" fill="#fffce8" stroke="#101010" stroke-width="0.9"/>
<rect x="94.2" y="438.2" width="3.4" height="2.4" fill="#f02020"/>
<rect x="94.2" y="441.8" width="4.6" height="2.6" fill="#f8b020"/>
</svg>
<div style="left:144.2px;top:433.8px;width:75.8px;height:12.6px;background:#ece9d8;border:1px solid;border-color:#a8a494 #6e6c60 #6e6c60 #fbfaf4;border-radius:1px 1px 3px 3px;"></div>
<span id="t22" style="left:171px;top:433.8px;font:normal 9.8px/13px 'Liberation Sans',Arial,sans-serif;color:#000;transform:scaleX(0.8034);transform-origin:0 50%;">File Report</span>
<svg style="left:153px;top:434.2px" width="13" height="12" viewBox="153 434.2 13 12">
<polygon points="155.5,435.2 161,435.2 163.5,437.7 163.5,445.7 155.5,445.7" fill="#fffce8" stroke="#101010" stroke-width="0.9"/>
<rect x="157.2" y="438.2" width="3.4" height="2.4" fill="#f02020"/>
<rect x="157.2" y="441.8" width="4.6" height="2.6" fill="#f8b020"/>
<polyline points="162,443.2 165.5,446.2" fill="none" stroke="#101010" stroke-width="1.5" />
</svg>
<div style="left:10px;top:447.5px;width:62.4px;height:13.3px;background:#ece9d8;border:1px solid;border-color:#a8a494 #6e6c60 #6e6c60 #fbfaf4;border-radius:1px 1px 3px 3px;"></div>
<span id="t23" style="left:35.5px;top:447.85px;font:normal 9.8px/13px 'Liberation Sans',Arial,sans-serif;color:#000;transform:scaleX(0.8477);transform-origin:0 50%;">Prj Files</span>
<svg style="left:17px;top:448px" width="13" height="12" viewBox="17 448 13 12">
<rect x="18" y="449" width="6" height="9" fill="#e8f0ff" stroke="#1030b0" stroke-width="0.9"/>
<rect x="22.5" y="450.5" width="6.5" height="9" fill="#fff" stroke="#1030b0" stroke-width="0.9"/>
<rect x="24" y="454.5" width="3.2" height="3" fill="#3080e0"/>
<rect x="19.2" y="451" width="2.4" height="5" fill="#f8e040"/>
<rect x="26" y="452" width="2" height="2" fill="#f8a020"/>
</svg>
<div style="left:73.8px;top:447.5px;width:73.2px;height:13.3px;background:#ece9d8;border:1px solid;border-color:#a8a494 #6e6c60 #6e6c60 #fbfaf4;border-radius:1px 1px 3px 3px;"></div>
<span id="t24" style="left:99.5px;top:447.85px;font:normal 9.8px/13px 'Liberation Sans',Arial,sans-serif;color:#000;transform:scaleX(0.8021);transform-origin:0 50%;">Prj Browse</span>
<svg style="left:80px;top:448px" width="13" height="12" viewBox="80 448 13 12">
<polygon points="89.5,448.5 92,451.5 89.5,454.5 87,451.5" fill="#1870f0" stroke="#103890" stroke-width="0.5"/>
<rect x="81.5" y="455.8" width="3.6" height="3.4" fill="#60a898"/>
<rect x="88" y="455.8" width="3.6" height="3.6" fill="#e8e8e0" stroke="#707070" stroke-width="0.6"/>
</svg>
<div style="left:148.4px;top:447.5px;width:71.6px;height:13.3px;background:#ece9d8;border:1px solid;border-color:#a8a494 #6e6c60 #6e6c60 #fbfaf4;border-radius:1px 1px 3px 3px;"></div>
<span id="t25" style="left:174.5px;top:447.85px;font:normal 9.8px/13px 'Liberation Sans',Arial,sans-serif;color:#000;transform:scaleX(0.7821);transform-origin:0 50%;">Prj Report</span>
<svg style="left:155px;top:448px" width="13" height="12" viewBox="155 448 13 12">
<rect x="156.5" y="449" width="9" height="9.5" fill="#f0f6ff" stroke="#1030b0" stroke-width="0.9"/>
<rect x="156.5" y="449" width="9" height="2" fill="#2858d0"/>
<rect x="158" y="453" width="3" height="3" fill="#f08020"/>
<circle cx="163.5" cy="456" r="2.2" fill="#c0e8ff" stroke="#1030b0" stroke-width="0.9"/>
<polyline points="165,457.8 167.5,460" fill="none" stroke="#1030b0" stroke-width="1.3" />
</svg>
<span id="t26" style="left:80.5px;top:448px;font:bold 5.5px/7px 'Liberation Sans',Arial,sans-serif;color:#5060a0;">S</span>
<div style="left:225.5px;top:60.3px;width:434.5px;height:406.2px;background:#fff;border-left:1.5px solid #404040;border-top:1.2px solid #404040;"></div>
<div style="left:227px;top:61.5px;width:12.5px;height:405px;background:#d6d2c8;"></div>
<span id="t27" style="left:241px;top:61px;font:normal 9px/12px 'DejaVu Sans','Liberation Sans',sans-serif;color:#101010;letter-spacing:0.3px;"><span style="position:static;color:#e8202a">static</span></span>
<span id="t28" style="left:276px;top:61px;font:normal 9px/12px 'DejaVu Sans','Liberation Sans',sans-serif;color:#101010;letter-spacing:0.32px;"><span style="position:static;color:#101010">JSBool</span></span>
<span id="t29" style="left:315px;top:61px;font:normal 9px/12px 'DejaVu Sans','Liberation Sans',sans-serif;color:#101010;letter-spacing:0.16px;"><span style="position:static;color:#101010">regexp_compile</span><span style="position:static;color:#1830e0">(</span></span>
<span id="t30" style="left:397.6px;top:61px;font:normal 9px/12px 'DejaVu Sans','Liberation Sans',sans-serif;color:#101010;letter-spacing:0.26px;"><span style="position:static;color:#101010">JSContext</span></span>
<span id="t31" style="left:453.8px;top:61px;font:normal 9px/12px 'DejaVu Sans','Liberation Sans',sans-serif;color:#101010;letter-spacing:-0.29px;"><span style="position:static;color:#1830e0">*</span><span style="position:static;color:#101010">cx</span><span style="position:static;color:#1830e0">,</span></span>
<span id="t32" style="left:476.7px;top:61px;font:normal 9px/12px 'DejaVu Sans','Liberation Sans',sans-serif;color:#101010;letter-spacing:1.81px;"><span style="position:static;color:#101010">JS</span></span>
<span id="t33" style="left:241px;top:71.5px;font:normal 9px/12px 'DejaVu Sans','Liberation Sans',sans-serif;color:#101010;"><span style="position:static;color:#1830e0">{</span></span>
<span id="t34" style="left:259px;top:82px;font:normal 9px/12px 'DejaVu Sans','Liberation Sans',sans-serif;color:#101010;letter-spacing:0.31px;"><span style="position:static;color:#101010">JSString</span></span>
<span id="t35" style="left:314.4px;top:82px;font:normal 9px/12px 'DejaVu Sans','Liberation Sans',sans-serif;color:#101010;"><span style="position:static;color:#1830e0">*</span></span>
<span id="t36" style="left:324.5px;top:82px;font:normal 9px/12px 'DejaVu Sans','Liberation Sans',sans-serif;color:#101010;letter-spacing:-0.36px;"><span style="position:static;color:#101010">opt</span><span style="position:static;color:#1830e0">,</span></span>
<span id="t37" style="left:348px;top:82px;font:normal 9px/12px 'DejaVu Sans','Liberation Sans',sans-serif;color:#101010;"><span style="position:static;color:#1830e0">*</span></span>
<span id="t38" style="left:357.5px;top:82px;font:normal 9px/12px 'DejaVu Sans','Liberation Sans',sans-serif;color:#101010;letter-spacing:0.31px;"><span style="position:static;color:#101010">str</span><span style="position:static;color:#1830e0">;</span></span>
<span id="t39" style="left:259px;top:92.5px;font:normal 9px/12px 'DejaVu Sans','Liberation Sans',sans-serif;color:#101010;letter-spacing:0.35px;"><span style="position:static;color:#101010">JSRegExp</span></span>
<span id="t40" style="left:314.4px;top:92.5px;font:normal 9px/12px 'DejaVu Sans','Liberation Sans',sans-serif;color:#101010;"><span style="position:static;color:#1830e0">*</span></span>
<span id="t41" style="left:324.5px;top:92.5px;font:normal 9px/12px 'DejaVu Sans','Liberation Sans',sans-serif;color:#101010;letter-spacing:-0.44px;"><span style="position:static;color:#101010">oldre</span><span style="position:static;color:#1830e0">,</span></span>
<span id="t42" style="left:355.6px;top:92.5px;font:normal 9px/12px 'DejaVu Sans','Liberation Sans',sans-serif;color:#101010;"><span style="position:static;color:#1830e0">*</span></span>
<span id="t43" style="left:366px;top:92.5px;font:normal 9px/12px 'DejaVu Sans','Liberation Sans',sans-serif;color:#101010;letter-spacing:0.3px;"><span style="position:static;color:#101010">re</span><span style="position:static;color:#1830e0">;</span></span>
<span id="t44" style="left:259px;top:103px;font:normal 9px/12px 'DejaVu Sans','Liberation Sans',sans-serif;color:#101010;letter-spacing:0.32px;"><span style="position:static;color:#101010">JSBool</span></span>
<span id="t45" style="left:324.5px;top:103px;font:normal 9px/12px 'DejaVu Sans','Liberation Sans',sans-serif;color:#101010;letter-spacing:0.14px;"><span style="position:static;color:#101010">ok</span><span style="position:static;color:#1830e0">;</span></span>
<span id="t46" style="left:259px;top:124px;font:normal 9px/12px 'DejaVu Sans','Liberation Sans',sans-serif;color:#101010;letter-spacing:0.14px;"><span style="position:static;color:#e8202a">if</span><span style="position:static;color:#1830e0">(</span></span>
<span id="t47" style="left:273px;top:124px;font:normal 9px/12px 'DejaVu Sans','Liberation Sans',sans-serif;color:#101010;letter-spacing:0.39px;"><span style="position:static;color:#1830e0">!</span><span style="position:static;color:#101010">JS_InstanceOf</span><span style="position:static;color:#1830e0">(</span></span>
<span id="t48" style="left:353px;top:124px;font:normal 9px/12px 'DejaVu Sans','Liberation Sans',sans-serif;color:#101010;letter-spacing:-0.72px;"><span style="position:static;color:#101010">cx</span><span style="position:static;color:#1830e0">,</span></span>
<span id="t49" style="left:370px;top:124px;font:normal 9px/12px 'DejaVu Sans','Liberation Sans',sans-serif;color:#101010;letter-spacing:-0.15px;"><span style="position:static;color:#101010">obj</span><span style="position:static;color:#1830e0">,</span></span>
<span id="t50" style="left:393px;top:124px;font:normal 9px/12px 'DejaVu Sans','Liberation Sans',sans-serif;color:#101010;letter-spacing:0.34px;"><span style="position:static;color:#1830e0">&amp;</span><span style="position:static;color:#101010">js_RegExpClass</span><span style="position:static;color:#1830e0">,</span></span>
<span id="t51" style="left:277px;top:134.5px;font:normal 9px/12px 'DejaVu Sans','Liberation Sans',sans-serif;color:#101010;letter-spacing:0.24px;"><span style="position:static;color:#e8202a">return</span></span>
<span id="t52" style="left:311.4px;top:134.5px;font:normal 9px/12px 'DejaVu Sans','Liberation Sans',sans-serif;color:#101010;letter-spacing:0.48px;"><span style="position:static;color:#101010">JS_FALSE</span><span style="position:static;color:#1830e0">;</span></span>
<span id="t53" style="left:259.5px;top:145px;font:normal 9px/12px 'DejaVu Sans','Liberation Sans',sans-serif;color:#101010;letter-spacing:0.37px;"><span style="position:static;color:#101010">opt </span><span style="position:static;color:#1830e0">=</span><span style="position:static;color:#101010"> NULL</span><span style="position:static;color:#1830e0">;</span></span>
<span id="t54" style="left:259px;top:155.5px;font:normal 9px/12px 'DejaVu Sans','Liberation Sans',sans-serif;color:#101010;letter-spacing:0.6px;"><span style="position:static;color:#101010">JS_LOCK_OBJ</span><span style="position:static;color:#1830e0">(</span><span style="position:static;color:#101010"> cx</span><span style="position:static;color:#1830e0">,</span><span style="position:static;color:#101010"> obj </span><span style="position:static;color:#1830e0">)</span><span style="position:static;color:#1830e0">;</span></span>
<span id="t55" style="left:259px;top:166px;font:normal 9px/12px 'DejaVu Sans','Liberation Sans',sans-serif;color:#101010;letter-spacing:0.38px;"><span style="position:static;color:#e8202a">if</span><span style="position:static;color:#1830e0">(</span><span style="position:static;color:#101010"> argc </span><span style="position:static;color:#1830e0">==</span><span style="position:static;color:#101010"> 0 </span><span style="position:static;color:#1830e0">)</span></span>
<span id="t56" style="left:259px;top:176.5px;font:normal 9px/12px 'DejaVu Sans','Liberation Sans',sans-serif;color:#101010;"><span style="position:static;color:#1830e0">{</span></span>
<span id="t57" style="left:277.6px;top:187px;font:normal 9px/12px 'DejaVu Sans','Liberation Sans',sans-serif;color:#101010;letter-spacing:0.12px;"><span style="position:static;color:#101010">str </span><span style="position:static;color:#1830e0">=</span><span style="position:static;color:#101010"> cx</span><span style="position:static;color:#1830e0">-&gt;</span><span style="position:static;color:#101010">runtime</span><span style="position:static;color:#1830e0">-&gt;</span><span style="position:static;color:#101010">emptyString</span><span style="position:static;color:#1830e0">;</span></span>
<span id="t58" style="left:259px;top:197.5px;font:normal 9px/12px 'DejaVu Sans','Liberation Sans',sans-serif;color:#101010;"><span style="position:static;color:#1830e0">}</span></span>
<span id="t59" style="left:259.5px;top:208px;font:normal 9px/12px 'DejaVu Sans','Liberation Sans',sans-serif;color:#101010;letter-spacing:0.31px;"><span style="position:static;color:#e8202a">else</span></span>
<div style="left:3px;top:465.3px;width:657px;height:2.8px;background:linear-gradient(to bottom,#dcd8c8,#aca899);"></div>
<div style="left:3px;top:468px;width:657px;height:1.2px;background:#484848;"></div>
<div style="left:3px;top:469.2px;width:657px;height:1px;background:#fff;"></div>
</div>
<div style="left:479.3px;top:53.1px;width:320.7px;height:532.9px;overflow:hidden;border-radius:5px 5px 0 0;background:#0a44e0;">
<div style="left:0px;top:0px;width:320.7px;height:23.7px;background:linear-gradient(to bottom,#0a5be0 0%,#3c8cf8 6%,#2a7ef4 10%,#0d62e8 18%,#0456e2 30%,#0355e4 55%,#0660f2 72%,#0a68f8 82%,#0458e0 92%,#0242b8 100%);"></div>
<div style="left:2.9px;top:23.6px;width:314.5px;height:506px;background:#fff;"></div>
<svg style="left:4.7px;top:6.1px" width="12.8" height="12.8" viewBox="484 59.2 12.8 12.8">
<rect x="484" y="59.2" width="12.8" height="12.8" fill="#f4e4ea"/>
<circle cx="490.93" cy="65.6" r="3.2" fill="none" stroke="#c8a0c0" stroke-width="1.2"/>
<polygon points="487.2,59.73 489.87,62.4 487.2,65.07 484.53,62.4" fill="#10c0f0" stroke="#204060" stroke-width="0.5"/>
<polygon points="493.6,66.13 496.27,68.8 493.6,71.47 490.93,68.8" fill="#10c0f0" stroke="#204060" stroke-width="0.5"/>
<rect x="484.53" y="67.2" width="4.8" height="2.13" fill="#f0e000" stroke="#202020" stroke-width="0.5"/>
<rect x="492.53" y="59.73" width="3.2" height="3.2" fill="#303030"/>
<polyline points="487.2,65.07 487.2,67.2" fill="none" stroke="#202020" stroke-width="0.8"  shape-rendering="crispEdges"/>
<polyline points="494.13,62.93 494.13,66.13" fill="none" stroke="#202020" stroke-width="0.8"  shape-rendering="crispEdges"/>
</svg>
<span id="t60" style="left:20.7px;top:6.3px;font:bold 11px/14px 'Liberation Sans',Arial,sans-serif;color:#fff;transform:scaleX(0.9487);transform-origin:0 50%;text-shadow:1px 1px 0 #0a2890;">Call Tree of : regexp_compile</span>
<div style="left:263.4px;top:5.1px;width:16.1px;height:16.3px;background:radial-gradient(circle at 30% 25%,#6aa0fa 0%,#2f6ae8 50%,#1848c8 100%);border:1px solid rgba(255,255,255,0.92);border-radius:2.5px;"></div>
<svg style="left:263.4px;top:5.1px" width="16.1" height="16.3" viewBox="742.7 58.2 16.1 16.3">
<rect x="746.73" y="68.96" width="5.8" height="2.61" fill="#fff"/>
</svg>
<div style="left:281.4px;top:5.1px;width:16.1px;height:16.3px;background:radial-gradient(circle at 30% 25%,#6aa0fa 0%,#2f6ae8 50%,#1848c8 100%);border:1px solid rgba(255,255,255,0.92);border-radius:2.5px;"></div>
<svg style="left:281.4px;top:5.1px" width="16.1" height="16.3" viewBox="760.7 58.2 16.1 16.3">
<rect x="765.05" y="63.09" width="7.73" height="7.17" fill="none" stroke="#fff" stroke-width="1.2"/>
<rect x="765.05" y="62.11" width="7.73" height="2.61" fill="#fff"/>
</svg>
<div style="left:299.4px;top:5.1px;width:16.1px;height:16.3px;background:radial-gradient(circle at 30% 25%,#f08868 0%,#e24c26 45%,#cc340e 100%);border:1px solid rgba(255,255,255,0.92);border-radius:2.5px;"></div>
<svg style="left:299.4px;top:5.1px" width="16.1" height="16.3" viewBox="778.7 58.2 16.1 16.3">
<polyline points="783.05,62.6 790.45,70.1" fill="none" stroke="#fff" stroke-width="1.8" />
<polyline points="790.45,62.6 783.05,70.1" fill="none" stroke="#fff" stroke-width="1.8" />
</svg>
<div style="left:2.9px;top:23.6px;width:22px;height:506px;background:#ece9d8;"></div>
<div style="left:3.3px;top:26.5px;width:20.7px;height:19.9px;background:#ece9d8;border:1px solid;border-color:#fff #aca899 #aca899 #fff;"></div>
<svg style="left:3.7px;top:26.5px" width="20.5" height="19.5" viewBox="483 79.6 20.5 19.5">
<polyline points="497.2,93.9 491.2,93.9 491.2,88.4" fill="none" stroke="#101010" stroke-width="1"  shape-rendering="crispEdges"/>
<polyline points="497.2,93.9 497.2,90.9 494.2,90.9 494.2,88.4" fill="none" stroke="#101010" stroke-width="1"  shape-rendering="crispEdges"/>
<polygon points="488.7,88.4 492.7,83.9 496.7,88.4" fill="#ece9d8" stroke="#101010" stroke-width="1"/>
</svg>
<div style="left:3.3px;top:47.45px;width:20.7px;height:19.9px;background:#ece9d8;border:1px solid;border-color:#fff #aca899 #aca899 #fff;"></div>
<svg style="left:3.7px;top:47.45px" width="20.5" height="19.5" viewBox="483 100.55 20.5 19.5">
<path d="M 492.2 107.35 a 4.2 3.6 0 1 1 -1 6" fill="none" stroke="#101010" stroke-width="1.1"/>
<polygon points="486.7,105.85 492.2,105.85 492.2,109.85" fill="#ece9d8" stroke="#101010" stroke-width="1"/>
</svg>
<div style="left:3.3px;top:68.4px;width:20.7px;height:19.9px;background:#ece9d8;border:1px solid;border-color:#fff #aca899 #aca899 #fff;"></div>
<svg style="left:3.7px;top:68.4px" width="20.5" height="19.5" viewBox="483 121.5 20.5 19.5">
<path d="M 494.2 128.3 a 4.2 3.6 0 1 0 1 6" fill="none" stroke="#b0ac9c" stroke-width="1.1"/>
<polygon points="499.7,126.8 494.2,126.8 494.2,130.8" fill="#ece9d8" stroke="#b0ac9c" stroke-width="1"/>
</svg>
<div style="left:3.3px;top:89.35px;width:20.7px;height:19.9px;background:#ece9d8;border:1px solid;border-color:#fff #aca899 #aca899 #fff;"></div>
<svg style="left:3.7px;top:89.35px" width="20.5" height="19.5" viewBox="483 142.45 20.5 19.5">
<polyline points="488.7,156.25 493.2,151.25 497.7,156.25" fill="none" stroke="#b0ac9c" stroke-width="1.2" />
<circle cx="493.2" cy="149.75" r="1.8" fill="#c8c4b4"/>
</svg>
<div style="left:3.3px;top:110.3px;width:20.7px;height:19.9px;background:#ece9d8;border:1px solid;border-color:#fff #aca899 #aca899 #fff;"></div>
<svg style="left:3.7px;top:110.3px" width="20.5" height="19.5" viewBox="483 163.4 20.5 19.5">
<polyline points="489.4,169.4 497,177" fill="none" stroke="#d01010" stroke-width="1.8" />
<polyline points="497,169.4 489.4,177" fill="none" stroke="#d01010" stroke-width="1.8" />
</svg>
<div style="left:3.3px;top:131.25px;width:20.7px;height:19.9px;background:#ece9d8;border:1px solid;border-color:#fff #aca899 #aca899 #fff;"></div>
<svg style="left:3.7px;top:131.25px" width="20.5" height="19.5" viewBox="483 184.35 20.5 19.5">
<polygon points="491.2,189.95 491.2,198.75 493.4,196.75 496,195.75" fill="#2860e8" stroke="#1030a0" stroke-width="0.5"/>
</svg>
<div style="left:3.3px;top:152.2px;width:20.7px;height:19.9px;background:#ece9d8;border:1px solid;border-color:#fff #aca899 #aca899 #fff;"></div>
<svg style="left:3.7px;top:152.2px" width="20.5" height="19.5" viewBox="483 205.3 20.5 19.5">
<polygon points="489.7,210.9 489.7,219.7 491.9,217.7 494.5,216.7" fill="#2860e8" stroke="#1030a0" stroke-width="0.5"/>
<polyline points="498.2,219.1 498.2,213.1" fill="none" stroke="#101010" stroke-width="1.2"  shape-rendering="crispEdges"/>
<polygon points="496.2,214.1 498.2,210.6 500.2,214.1" fill="#101010" />
</svg>
<div style="left:3.3px;top:173.15px;width:20.7px;height:19.9px;background:#ece9d8;border:1px solid;border-color:#fff #aca899 #aca899 #fff;"></div>
<svg style="left:3.7px;top:173.15px" width="20.5" height="19.5" viewBox="483 226.25 20.5 19.5">
<polygon points="489.7,231.85 489.7,240.65 491.9,238.65 494.5,237.65" fill="#2860e8" stroke="#1030a0" stroke-width="0.5"/>
<polyline points="498.2,240.05 498.2,234.05" fill="none" stroke="#101010" stroke-width="1.2"  shape-rendering="crispEdges"/>
<polygon points="496.2,235.05 498.2,231.55 500.2,235.05" fill="#101010" />
</svg>
<svg style="left:24.7px;top:22.9px" width="280" height="476" viewBox="504 76 280 476">
<polyline points="522.5,110 522.5,552" fill="none" stroke="#101010" stroke-width="1"  shape-rendering="crispEdges"/>
<polyline points="538.5,130 538.5,552" fill="none" stroke="#101010" stroke-width="1"  shape-rendering="crispEdges"/>
<polyline points="554.5,150 554.5,552" fill="none" stroke="#101010" stroke-width="1"  shape-rendering="crispEdges"/>
<polyline points="570.5,170 570.5,552" fill="none" stroke="#101010" stroke-width="1"  shape-rendering="crispEdges"/>
<polyline points="602.5,290 602.5,552" fill="none" stroke="#101010" stroke-width="1"  shape-rendering="crispEdges"/>
<polyline points="618.5,350 618.5,552" fill="none" stroke="#101010" stroke-width="1"  shape-rendering="crispEdges"/>
<polyline points="634.5,390 634.5,401.5" fill="none" stroke="#101010" stroke-width="1"  shape-rendering="crispEdges"/>
<polyline points="650.5,410 650.5,514" fill="none" stroke="#101010" stroke-width="1"  shape-rendering="crispEdges"/>
<polyline points="666.5,430 666.5,482" fill="none" stroke="#101010" stroke-width="1"  shape-rendering="crispEdges"/>
<polyline points="522,121.5 530,121.5" fill="none" stroke="#101010" stroke-width="1"  shape-rendering="crispEdges"/>
<polyline points="538,141.5 546,141.5" fill="none" stroke="#101010" stroke-width="1"  shape-rendering="crispEdges"/>
<polyline points="554,161.5 562,161.5" fill="none" stroke="#101010" stroke-width="1"  shape-rendering="crispEdges"/>
<polyline points="570,181.5 578,181.5" fill="none" stroke="#101010" stroke-width="1"  shape-rendering="crispEdges"/>
<polyline points="570,201.5 578,201.5" fill="none" stroke="#101010" stroke-width="1"  shape-rendering="crispEdges"/>
<polyline points="570,221.5 578,221.5" fill="none" stroke="#101010" stroke-width="1"  shape-rendering="crispEdges"/>
<polyline points="570,241.5 578,241.5" fill="none" stroke="#101010" stroke-width="1"  shape-rendering="crispEdges"/>
<polyline points="570,261.5 578,261.5" fill="none" stroke="#101010" stroke-width="1"  shape-rendering="crispEdges"/>
<polyline points="586,281.5 594,281.5" fill="none" stroke="#101010" stroke-width="1"  shape-rendering="crispEdges"/>
<polyline points="602,301.5 610.2,301.5" fill="none" stroke="#101010" stroke-width="1"  shape-rendering="crispEdges"/>
<polyline points="602,321.5 610.2,321.5" fill="none" stroke="#101010" stroke-width="1"  shape-rendering="crispEdges"/>
<polyline points="602,341.5 610.2,341.5" fill="none" stroke="#101010" stroke-width="1"  shape-rendering="crispEdges"/>
<polyline points="618,360.5 626.5,360.5" fill="none" stroke="#101010" stroke-width="1"  shape-rendering="crispEdges"/>
<polyline points="618,380.5 626.5,380.5" fill="none" stroke="#101010" stroke-width="1"  shape-rendering="crispEdges"/>
<polyline points="634,400.5 642.5,400.5" fill="none" stroke="#101010" stroke-width="1"  shape-rendering="crispEdges"/>
<polyline points="650,421.5 658.6,421.5" fill="none" stroke="#101010" stroke-width="1"  shape-rendering="crispEdges"/>
<polyline points="666,441.5 674.5,441.5" fill="none" stroke="#101010" stroke-width="1"  shape-rendering="crispEdges"/>
<polyline points="666,460.5 674.5,460.5" fill="none" stroke="#101010" stroke-width="1"  shape-rendering="crispEdges"/>
<polyline points="666,481.5 674.5,481.5" fill="none" stroke="#101010" stroke-width="1"  shape-rendering="crispEdges"/>
<polyline points="650,513.5 658,513.5" fill="none" stroke="#101010" stroke-width="1"  shape-rendering="crispEdges"/>
<polyline points="618,545.5 626.2,545.5" fill="none" stroke="#101010" stroke-width="1"  shape-rendering="crispEdges"/>
</svg>
<div style="left:197.3px;top:402.4px;width:107.4px;height:12px;background:#ffff70;"></div>
<span id="t61" style="left:40.7px;top:40.3px;font:normal 11.8px/15px 'Liberation Sans',Arial,sans-serif;color:#f80808;">-</span>
<span id="t62" style="left:52.7px;top:44.3px;font:normal 8.8px/11px 'Liberation Sans',Arial,sans-serif;color:#f80808;letter-spacing:-0.04px;">regexp_compile</span>
<span id="t63" style="left:56.7px;top:60.3px;font:normal 11.8px/15px 'Liberation Sans',Arial,sans-serif;color:#f80808;">-</span>
<span id="t64" style="left:68.7px;top:64.3px;font:normal 8.8px/11px 'Liberation Sans',Arial,sans-serif;color:#f80808;letter-spacing:-0.05px;">JS_InstanceOf</span>
<span id="t65" style="left:72.7px;top:80.3px;font:normal 11.8px/15px 'Liberation Sans',Arial,sans-serif;color:#f80808;">-</span>
<span id="t66" style="left:84.7px;top:84.3px;font:normal 8.8px/11px 'Liberation Sans',Arial,sans-serif;color:#f80808;letter-spacing:0.02px;">js_ValueToFunction</span>
<span id="t67" style="left:88.7px;top:100.3px;font:normal 11.8px/15px 'Liberation Sans',Arial,sans-serif;color:#f80808;">-</span>
<span id="t68" style="left:100.7px;top:104.3px;font:normal 8.8px/11px 'Liberation Sans',Arial,sans-serif;color:#f80808;letter-spacing:-0.11px;">js_ReportIsNotFunction</span>
<span id="t69" style="left:116.7px;top:124.3px;font:normal 8.8px/11px 'Liberation Sans',Arial,sans-serif;color:#101010;letter-spacing:-0.24px;">JS_GetTypeName</span>
<span id="t70" style="left:116.7px;top:144.3px;font:normal 8.8px/11px 'Liberation Sans',Arial,sans-serif;color:#101010;letter-spacing:0.01px;">JS_TypeOfValue</span>
<span id="t71" style="left:116.7px;top:164.3px;font:normal 8.8px/11px 'Liberation Sans',Arial,sans-serif;color:#101010;letter-spacing:-0.11px;">JS_InternString</span>
<span id="t72" style="left:116.7px;top:184.3px;font:normal 8.8px/11px 'Liberation Sans',Arial,sans-serif;color:#101010;letter-spacing:-0.09px;">js_DecompileValueGenerator</span>
<span id="t73" style="left:116.7px;top:204.3px;font:normal 8.8px/11px 'Liberation Sans',Arial,sans-serif;color:#f80808;letter-spacing:-0.2px;">JS_ReportErrorNumber</span>
<span id="t74" style="left:120.7px;top:220.3px;font:normal 11.8px/15px 'Liberation Sans',Arial,sans-serif;color:#f80808;">-</span>
<span id="t75" style="left:132.7px;top:224.3px;font:normal 8.8px/11px 'Liberation Sans',Arial,sans-serif;color:#f80808;letter-spacing:-0.05px;">js_ReportErrorNumberVA</span>
<span id="t76" style="left:136.3px;top:243.9px;font:bold 8.2px/11px 'Liberation Sans',Arial,sans-serif;color:#18a020;">+</span>
<span id="t77" style="left:148.7px;top:244.3px;font:normal 8.8px/11px 'Liberation Sans',Arial,sans-serif;color:#101010;letter-spacing:-0.22px;">js_PCToLineNumber</span>
<span id="t78" style="left:136.3px;top:263.9px;font:bold 8.2px/11px 'Liberation Sans',Arial,sans-serif;color:#18a020;">+</span>
<span id="t79" style="left:148.7px;top:264.3px;font:normal 8.8px/11px 'Liberation Sans',Arial,sans-serif;color:#101010;letter-spacing:-0.05px;">js_ExpandErrorArguments</span>
<span id="t80" style="left:136.7px;top:280.3px;font:normal 11.8px/15px 'Liberation Sans',Arial,sans-serif;color:#f80808;">-</span>
<span id="t81" style="left:149.3px;top:284.3px;font:normal 8.8px/11px 'Liberation Sans',Arial,sans-serif;color:#f80808;letter-spacing:-0.06px;">js_ErrorToException</span>
<span id="t82" style="left:151.5px;top:303.6px;font:bold 8.8px/11px 'Liberation Sans',Arial,sans-serif;color:#1818f0;">L</span>
<span id="t83" style="left:165.3px;top:304px;font:normal 8.8px/11px 'Liberation Sans',Arial,sans-serif;color:#101010;letter-spacing:0.07px;">fprintf</span>
<span id="t84" style="left:152.7px;top:320.1px;font:normal 11.8px/15px 'Liberation Sans',Arial,sans-serif;color:#f80808;">-</span>
<span id="t85" style="left:164.5px;top:324.1px;font:normal 8.8px/11px 'Liberation Sans',Arial,sans-serif;color:#f80808;letter-spacing:-0.1px;">js_GetClassPrototype</span>
<span id="t86" style="left:168.7px;top:339.9px;font:normal 11.8px/15px 'Liberation Sans',Arial,sans-serif;color:#f80808;">-</span>
<span id="t87" style="left:181px;top:343.9px;font:normal 8.8px/11px 'Liberation Sans',Arial,sans-serif;color:#f80808;letter-spacing:-0.07px;">FindConstructor</span>
<span id="t88" style="left:184.7px;top:360.3px;font:normal 11.8px/15px 'Liberation Sans',Arial,sans-serif;color:#f80808;">-</span>
<span id="t89" style="left:196.7px;top:364.3px;font:normal 8.8px/11px 'Liberation Sans',Arial,sans-serif;color:#f80808;letter-spacing:-0.05px;">js_Atomize</span>
<span id="t90" style="left:200.3px;top:383.9px;font:bold 8.2px/11px 'Liberation Sans',Arial,sans-serif;color:#18a020;">+</span>
<span id="t91" style="left:213.1px;top:384.3px;font:normal 8.8px/11px 'Liberation Sans',Arial,sans-serif;color:#101010;letter-spacing:-0.08px;">js_InflateString</span>
<span id="t92" style="left:200.3px;top:403.4px;font:bold 8.2px/11px 'Liberation Sans',Arial,sans-serif;color:#18a020;">+</span>
<span id="t93" style="left:213.1px;top:403.8px;font:normal 8.8px/11px 'Liberation Sans',Arial,sans-serif;color:#f80808;letter-spacing:-0.06px;">js_AtomizeString</span>
<span id="t94" style="left:200.3px;top:423.9px;font:bold 8.2px/11px 'Liberation Sans',Arial,sans-serif;color:#18a020;">+</span>
<span id="t95" style="left:213.1px;top:424.3px;font:normal 8.8px/11px 'Liberation Sans',Arial,sans-serif;color:#101010;letter-spacing:-0.05px;">JS_free</span>
<span id="t96" style="left:183.5px;top:455.9px;font:bold 8.8px/11px 'Liberation Sans',Arial,sans-serif;color:#1818f0;">L</span>
<span id="t97" style="left:197.3px;top:456.3px;font:normal 8.8px/11px 'Liberation Sans',Arial,sans-serif;color:#101010;letter-spacing:-0px;">strlen</span>
<span id="t98" style="left:152.3px;top:487.9px;font:bold 8.2px/11px 'Liberation Sans',Arial,sans-serif;color:#18a020;">+</span>
<span id="t99" style="left:164.5px;top:488.3px;font:normal 8.8px/11px 'Liberation Sans',Arial,sans-serif;color:#101010;letter-spacing:0.02px;">js_NewObject</span>
<div style="left:24.7px;top:497.4px;width:280px;height:2px;background:#505050;"></div>
<div style="left:24.7px;top:499.4px;width:280px;height:17.5px;background:#fff;"></div>
<span id="t100" style="left:120.7px;top:503px;font:normal 10px/13px 'Liberation Serif','Times New Roman',serif;color:#e01818;letter-spacing:0.49px;">LLA\js\src\jsatom.c</span>
<div style="left:305.2px;top:23.6px;width:12.2px;height:493px;background:#f8f7f3;"></div>
<div style="left:305.6px;top:24.7px;width:11.4px;height:11.8px;background:linear-gradient(135deg,#d6e2fd 0%,#bccdfa 60%,#aebff4 100%);border:1px solid #fff;border-radius:2px;box-shadow:inset 0 0 0 0.5px #a8bcf0;"></div>
<svg style="left:305.6px;top:24.7px" width="11.4" height="11.8" viewBox="784.9 77.8 11.4 11.8">
<polyline points="788,85.2 790.6,82.2 793.2,85.2" fill="none" stroke="#2c3c74" stroke-width="1.35" />
</svg>
<div style="left:305.6px;top:37.9px;width:11.4px;height:80.5px;background:linear-gradient(to right,#cfdcfd 0%,#c2d3fc 50%,#b4c6f6 100%);border:1px solid #fff;border-radius:2px;box-shadow:inset 0 0 0 0.5px #a0b4ec;"></div>
<div style="left:308.8px;top:75.65px;width:5px;height:1px;background:#8ea4dc;"></div>
<div style="left:308.8px;top:77.65px;width:5px;height:1px;background:#8ea4dc;"></div>
<div style="left:308.8px;top:79.65px;width:5px;height:1px;background:#8ea4dc;"></div>
<div style="left:305.6px;top:502.9px;width:11.4px;height:11.6px;background:linear-gradient(135deg,#d6e2fd 0%,#bccdfa 60%,#aebff4 100%);border:1px solid #fff;border-radius:2px;box-shadow:inset 0 0 0 0.5px #a8bcf0;"></div>
<svg style="left:305.6px;top:502.9px" width="11.4" height="11.6" viewBox="784.9 556 11.4 11.6">
<polyline points="788,560.3 790.6,563.3 793.2,560.3" fill="none" stroke="#2c3c74" stroke-width="1.35" />
</svg>
<div style="left:24.7px;top:516.3px;width:280.5px;height:13.3px;background:#f8f7f3;"></div>
<div style="left:20.7px;top:517.5px;width:258px;height:11.1px;background:linear-gradient(to bottom,#cfdcfd 0%,#c2d3fc 50%,#b4c6f6 100%);border:1px solid #fff;border-radius:2px;box-shadow:inset 0 0 0 0.5px #a0b4ec;"></div>
<div style="left:147.2px;top:520.55px;width:1px;height:5px;background:#8ea4dc;"></div>
<div style="left:149.2px;top:520.55px;width:1px;height:5px;background:#8ea4dc;"></div>
<div style="left:151.2px;top:520.55px;width:1px;height:5px;background:#8ea4dc;"></div>
<div style="left:290.5px;top:517.5px;width:12.2px;height:11.1px;background:linear-gradient(135deg,#d6e2fd 0%,#bccdfa 60%,#aebff4 100%);border:1px solid #fff;border-radius:2px;box-shadow:inset 0 0 0 0.5px #a8bcf0;"></div>
<svg style="left:290.5px;top:517.5px" width="12.2" height="11.1" viewBox="769.8 570.6 12.2 11.1">
<polyline points="774.4,573.55 777.4,576.15 774.4,578.75" fill="none" stroke="#2c3c74" stroke-width="1.35" />
</svg>
<div style="left:304.7px;top:516.3px;width:12.7px;height:13.3px;background:#ece9d8;"></div>
<svg style="left:304.7px;top:516.9px" width="13" height="13" viewBox="784 570 13 13">
<rect x="793.5" y="579.8" width="1.6" height="1.6" fill="#b0ac9c"/>
<rect x="790.5" y="579.8" width="1.6" height="1.6" fill="#b0ac9c"/>
<rect x="793.5" y="576.8" width="1.6" height="1.6" fill="#b0ac9c"/>
<rect x="787.5" y="579.8" width="1.6" height="1.6" fill="#b0ac9c"/>
<rect x="790.5" y="576.8" width="1.6" height="1.6" fill="#b0ac9c"/>
<rect x="793.5" y="573.8" width="1.6" height="1.6" fill="#b0ac9c"/>
</svg>
</div>
<div style="left:230px;top:216px;width:369px;height:384px;overflow:hidden;border-radius:2px 2px 0 0;background:#0a44e0;">
<div style="left:0px;top:0px;width:369px;height:18px;background:linear-gradient(to bottom,#0a5be0 0%,#3c8cf8 6%,#2a7ef4 10%,#0d62e8 18%,#0456e2 30%,#0355e4 55%,#0660f2 72%,#0a68f8 82%,#0458e0 92%,#0242b8 100%);"></div>
<div style="left:2.3px;top:18px;width:364.2px;height:363.5px;background:#fff;"></div>
<svg style="left:3.7px;top:4.7px" width="9.8" height="9.8" viewBox="233.7 220.7 9.8 9.8">
<rect x="233.7" y="220.7" width="9.8" height="9.8" fill="#f4e4ea"/>
<circle cx="239.01" cy="225.6" r="2.45" fill="none" stroke="#c8a0c0" stroke-width="1.2"/>
<polygon points="236.15,221.11 238.19,223.15 236.15,225.19 234.11,223.15" fill="#10c0f0" stroke="#204060" stroke-width="0.5"/>
<polygon points="241.05,226.01 243.09,228.05 241.05,230.09 239.01,228.05" fill="#10c0f0" stroke="#204060" stroke-width="0.5"/>
<rect x="234.11" y="226.82" width="3.68" height="1.63" fill="#f0e000" stroke="#202020" stroke-width="0.5"/>
<rect x="240.23" y="221.11" width="2.45" height="2.45" fill="#303030"/>
<polyline points="236.15,225.19 236.15,226.82" fill="none" stroke="#202020" stroke-width="0.8"  shape-rendering="crispEdges"/>
<polyline points="241.46,223.56 241.46,226.01" fill="none" stroke="#202020" stroke-width="0.8"  shape-rendering="crispEdges"/>
</svg>
<span id="t101" style="left:15.7px;top:4.7px;font:bold 8.3px/11px 'Liberation Sans',Arial,sans-serif;color:#fff;transform:scaleX(0.9341);transform-origin:0 50%;text-shadow:1px 1px 0 #0a2890;">Code Flowchart of : regexp_compile</span>
<div style="left:325px;top:3.5px;width:12.5px;height:12.5px;background:radial-gradient(circle at 30% 25%,#6aa0fa 0%,#2f6ae8 50%,#1848c8 100%);border:1px solid rgba(255,255,255,0.92);border-radius:2.5px;"></div>
<svg style="left:325px;top:3.5px" width="12.5" height="12.5" viewBox="555 219.5 12.5 12.5">
<rect x="558.12" y="227.75" width="4.5" height="2" fill="#fff"/>
</svg>
<div style="left:339px;top:3.5px;width:12.5px;height:12.5px;background:radial-gradient(circle at 30% 25%,#6aa0fa 0%,#2f6ae8 50%,#1848c8 100%);border:1px solid rgba(255,255,255,0.92);border-radius:2.5px;"></div>
<svg style="left:339px;top:3.5px" width="12.5" height="12.5" viewBox="569 219.5 12.5 12.5">
<rect x="574.25" y="222.75" width="4.25" height="3.75" fill="none" stroke="#fff" stroke-width="1"/>
<rect x="572.12" y="225" width="4.25" height="3.75" fill="#3a70e8" stroke="#fff" stroke-width="1"/>
</svg>
<div style="left:353px;top:3.5px;width:12.5px;height:12.5px;background:radial-gradient(circle at 30% 25%,#f08868 0%,#e24c26 45%,#cc340e 100%);border:1px solid rgba(255,255,255,0.92);border-radius:2.5px;"></div>
<svg style="left:353px;top:3.5px" width="12.5" height="12.5" viewBox="583 219.5 12.5 12.5">
<polyline points="586.38,222.88 592.12,228.62" fill="none" stroke="#fff" stroke-width="1.8" />
<polyline points="592.12,222.88 586.38,228.62" fill="none" stroke="#fff" stroke-width="1.8" />
</svg>
<div style="left:2.3px;top:18px;width:16.7px;height:355px;background:#ece9d8;"></div>
<div style="left:2.5px;top:20px;width:15.8px;height:15.2px;background:#f8f6ee;border:1px solid;border-color:#aca899 #fff #fff #aca899;"></div>
<svg style="left:2.5px;top:20px" width="15.8" height="15.2" viewBox="232.5 236 15.8 15.2">
<rect x="236.2" y="239" width="3.6" height="4" rx="1.2" fill="#9ad0ff" stroke="#1868d8" stroke-width="0.9"/>
<rect x="236.2" y="243.4" width="3.6" height="4.4" rx="1.2" fill="#7cc0ff" stroke="#1868d8" stroke-width="0.9"/>
<rect x="241" y="239" width="3.6" height="4" rx="1.2" fill="#9ad0ff" stroke="#1868d8" stroke-width="0.9"/>
<rect x="241" y="243.4" width="3.6" height="4.4" rx="1.2" fill="#7cc0ff" stroke="#1868d8" stroke-width="0.9"/>
</svg>
<div style="left:2.5px;top:35.7px;width:15.8px;height:15.2px;background:#ece9d8;border:1px solid;border-color:#fff #aca899 #aca899 #fff;"></div>
<svg style="left:2.5px;top:35.7px" width="15.8" height="15.2" viewBox="232.5 251.7 15.8 15.2">
<ellipse cx="241" cy="259.9" rx="2.6" ry="2.2" fill="#f8b020"/>
<ellipse cx="241.2" cy="260.1" rx="1.3" ry="1.1" fill="#fff8a0"/>
</svg>
<span id="t102" style="left:5.8px;top:35.5px;font:bold 12px/16px 'Liberation Sans',Arial,sans-serif;color:#701008;font-style:italic;">C</span>
<div style="left:2.5px;top:51.4px;width:15.8px;height:15.1px;background:#ece9d8;border:1px solid;border-color:#fff #aca899 #aca899 #fff;"></div>
<svg style="left:2.5px;top:51.4px" width="15.8" height="15.1" viewBox="232.5 267.4 15.8 15.1">
<polygon points="237,269.65 239.3,271.95 237,274.25 234.7,271.95" fill="#18a040" stroke="#0a4018" stroke-width="0.4"/>
<polygon points="243.8,269.65 246.1,271.95 243.8,274.25 241.5,271.95" fill="#18a040" stroke="#0a4018" stroke-width="0.4"/>
<polygon points="237,275.85 239.3,278.15 237,280.45 234.7,278.15" fill="#18a040" stroke="#0a4018" stroke-width="0.4"/>
<polygon points="243.8,275.85 246.1,278.15 243.8,280.45 241.5,278.15" fill="#e8d800" stroke="#0a4018" stroke-width="0.4"/>
<polyline points="239,271.95 241.8,271.95" fill="none" stroke="#101010" stroke-width="1"  shape-rendering="crispEdges"/>
<polyline points="239,278.15 241.8,278.15" fill="none" stroke="#101010" stroke-width="1"  shape-rendering="crispEdges"/>
</svg>
<div style="left:2.5px;top:67px;width:15.8px;height:15.2px;background:#ece9d8;border:1px solid;border-color:#fff #aca899 #aca899 #fff;"></div>
<svg style="left:2.5px;top:67px" width="15.8" height="15.2" viewBox="232.5 283 15.8 15.2">
<polyline points="235.9,290.6 244.9,290.6" fill="none" stroke="#b4b0a0" stroke-width="1.4" />
<polyline points="240.4,286.1 240.4,295.1" fill="none" stroke="#b4b0a0" stroke-width="1.4" />
<circle cx="240.4" cy="290.6" r="2" fill="#c8c4b4"/>
</svg>
<div style="left:2.5px;top:82.7px;width:15.8px;height:15.3px;background:#ece9d8;border:1px solid;border-color:#fff #aca899 #aca899 #fff;"></div>
<svg style="left:2.5px;top:82.7px" width="15.8" height="15.3" viewBox="232.5 298.7 15.8 15.3">
<polyline points="244.4,306.35 238.4,306.35" fill="none" stroke="#b4b0a0" stroke-width="2" />
<polygon points="235.9,306.35 239.9,302.95 239.9,309.75" fill="#b4b0a0" />
</svg>
<div style="left:2.5px;top:98.5px;width:15.8px;height:15.2px;background:#ece9d8;border:1px solid;border-color:#fff #aca899 #aca899 #fff;"></div>
<svg style="left:2.5px;top:98.5px" width="15.8" height="15.2" viewBox="232.5 314.5 15.8 15.2">
<polyline points="237,320.5 240.4,323.9 243.8,320.5" fill="none" stroke="#2050d0" stroke-width="1.6" />
</svg>
<div style="left:2.5px;top:114.2px;width:15.8px;height:15px;background:#ece9d8;border:1px solid;border-color:#fff #aca899 #aca899 #fff;"></div>
<svg style="left:2.5px;top:114.2px" width="15.8" height="15" viewBox="232.5 330.2 15.8 15">
<polyline points="236.4,337.7 242.4,337.7" fill="none" stroke="#b4b0a0" stroke-width="2" />
<polygon points="244.9,337.7 240.9,334.3 240.9,341.1" fill="#b4b0a0" />
</svg>
<div style="left:2.5px;top:132px;width:15.8px;height:14.8px;background:#ece9d8;border:1px solid;border-color:#fff #aca899 #aca899 #fff;"></div>
<svg style="left:2.5px;top:132px" width="15.8" height="14.8" viewBox="232.5 348 15.8 14.8">
<rect x="235.9" y="350.9" width="9" height="9" fill="#f8f040" stroke="#505000" stroke-width="0.7"/>
<polyline points="240.4,358.4 240.4,352.4" fill="none" stroke="#101010" stroke-width="1.1"  shape-rendering="crispEdges"/>
<polyline points="238,355 240.4,352.2 242.8,355" fill="none" stroke="#101010" stroke-width="1.1" />
</svg>
<div style="left:2.5px;top:148px;width:15.8px;height:14.8px;background:#ece9d8;border:1px solid;border-color:#fff #aca899 #aca899 #fff;"></div>
<svg style="left:2.5px;top:148px" width="15.8" height="14.8" viewBox="232.5 364 15.8 14.8">
<rect x="235.9" y="366.9" width="9" height="9" fill="#f8f040" stroke="#505000" stroke-width="0.7"/>
<polyline points="240.4,368.4 240.4,374.4" fill="none" stroke="#101010" stroke-width="1.1"  shape-rendering="crispEdges"/>
<polyline points="238,371.8 240.4,374.6 242.8,371.8" fill="none" stroke="#101010" stroke-width="1.1" />
</svg>
<div style="left:2.5px;top:166px;width:15.8px;height:14.7px;background:#ece9d8;border:1px solid;border-color:#fff #aca899 #aca899 #fff;"></div>
<span id="t103" style="left:5.8px;top:166.75px;font:bold 10.5px/14px 'Liberation Serif','Times New Roman',serif;color:#901818;">L</span>
<span id="t104" style="left:12.3px;top:166.95px;font:bold 6.2px/8px 'Liberation Serif','Times New Roman',serif;color:#101010;">1</span>
<div style="left:2.5px;top:182px;width:15.8px;height:14.7px;background:#ece9d8;border:1px solid;border-color:#fff #aca899 #aca899 #fff;"></div>
<span id="t105" style="left:5.8px;top:182.75px;font:bold 10.5px/14px 'Liberation Serif','Times New Roman',serif;color:#901818;">L</span>
<span id="t106" style="left:12.3px;top:182.95px;font:bold 6.2px/8px 'Liberation Serif','Times New Roman',serif;color:#101010;">2</span>
<div style="left:2.5px;top:198px;width:15.8px;height:14.7px;background:#ece9d8;border:1px solid;border-color:#fff #aca899 #aca899 #fff;"></div>
<span id="t107" style="left:5.8px;top:198.75px;font:bold 10.5px/14px 'Liberation Serif','Times New Roman',serif;color:#901818;">L</span>
<span id="t108" style="left:12.3px;top:198.95px;font:bold 6.2px/8px 'Liberation Serif','Times New Roman',serif;color:#101010;">3</span>
<div style="left:2.5px;top:214px;width:15.8px;height:14.7px;background:#ece9d8;border:1px solid;border-color:#fff #aca899 #aca899 #fff;"></div>
<span id="t109" style="left:5.8px;top:214.75px;font:bold 10.5px/14px 'Liberation Serif','Times New Roman',serif;color:#901818;">L</span>
<span id="t110" style="left:12.3px;top:214.95px;font:bold 6.2px/8px 'Liberation Serif','Times New Roman',serif;color:#101010;">4</span>
<div style="left:2.5px;top:230px;width:15.8px;height:14.7px;background:#ece9d8;border:1px solid;border-color:#fff #aca899 #aca899 #fff;"></div>
<span id="t111" style="left:5.8px;top:230.75px;font:bold 10.5px/14px 'Liberation Serif','Times New Roman',serif;color:#c89080;">L</span>
<span id="t112" style="left:12.3px;top:230.95px;font:bold 6.2px/8px 'Liberation Serif','Times New Roman',serif;color:#c8c080;">?</span>
<div style="left:2.5px;top:248.2px;width:15.8px;height:14.8px;background:#ece9d8;border:1px solid;border-color:#fff #aca899 #aca899 #fff;"></div>
<svg style="left:2.5px;top:248.2px" width="15.8" height="14.8" viewBox="232.5 464.2 15.8 14.8">
<rect x="235.9" y="467.1" width="4" height="9" fill="#f8e020"/>
</svg>
<span id="t113" style="left:6.4px;top:250.6px;font:bold 8px/10px 'Liberation Serif','Times New Roman',serif;color:#a04010;">3</span>
<span id="t114" style="left:10.9px;top:250.6px;font:bold 8px/10px 'Liberation Serif','Times New Roman',serif;color:#a01010;">1</span>
<div style="left:2.5px;top:264.7px;width:15.8px;height:14.3px;background:#ece9d8;border:1px solid;border-color:#fff #aca899 #aca899 #fff;"></div>
<svg style="left:2.5px;top:264.7px" width="15.8" height="14.3" viewBox="232.5 480.7 15.8 14.3">
<rect x="235.4" y="482.85" width="10" height="10" fill="#fff" stroke="#101010" stroke-width="1"/>
<rect x="235.4" y="482.85" width="10" height="3" fill="#f8e020"/>
<rect x="237.4" y="487.35" width="6" height="5" fill="#20a0d0"/>
</svg>
<svg style="left:19px;top:18px" width="338" height="355" viewBox="249 234 338 355">
<polyline points="324.5,255 324.5,276" fill="none" stroke="#1c30e8" stroke-width="1"  shape-rendering="crispEdges"/>
<polyline points="324.5,304 324.5,322.5" fill="none" stroke="#1c30e8" stroke-width="1"  shape-rendering="crispEdges"/>
<polyline points="384,289 420.5,289 420.5,352 324.5,352 324.5,356" fill="none" stroke="#3840d8" stroke-width="1"  shape-rendering="crispEdges"/>
<polyline points="324.5,389.5 324.5,408" fill="none" stroke="#1c30e8" stroke-width="1"  shape-rendering="crispEdges"/>
<polyline points="357.5,419 504.3,419 504.3,432" fill="none" stroke="#1c30e8" stroke-width="1"  shape-rendering="crispEdges"/>
<polyline points="324.5,430 324.5,448" fill="none" stroke="#1c30e8" stroke-width="1"  shape-rendering="crispEdges"/>
<polyline points="324.4,465 324.4,589" fill="none" stroke="#1010f0" stroke-width="2.2" />
<polyline points="504.3,456.5 504.3,475" fill="none" stroke="#1c30e8" stroke-width="1"  shape-rendering="crispEdges"/>
<polyline points="530.5,486.3 587,486.3" fill="none" stroke="#1c30e8" stroke-width="1"  shape-rendering="crispEdges"/>
<polyline points="504.3,497 504.3,516" fill="none" stroke="#1c30e8" stroke-width="1"  shape-rendering="crispEdges"/>
<polyline points="504.3,532.5 504.3,549" fill="none" stroke="#1c30e8" stroke-width="1"  shape-rendering="crispEdges"/>
<polyline points="504.3,565.5 504.3,570 567,570 567,588.5" fill="none" stroke="#f80808" stroke-width="2.2" />
<polygon points="417.6,315.5 423.4,315.5 420.5,320.5" fill="#e01010" />
<polygon points="378.5,349.2 378.5,354.8 373,352" fill="#e01010" />
<polygon points="429,416.4 429,421.6 434.5,419" fill="#e01010" />
<polygon points="529.5,567.6 529.5,572.6 534.5,570" fill="#c01010" />
<rect x="279" y="238" width="90" height="17" rx="8.5" fill="#f4faff" stroke="#a8a070" stroke-width="1"/>
<polygon points="264.5,277 324.25,273 384,277 384.4,289 384,301 324.25,305 264.5,301 264.1,289" fill="#fde8e6" stroke="#a8a070" stroke-width="1"/>
<rect x="276" y="322.5" width="95" height="16.5" rx="8.2" fill="#f2faff" stroke="#38b8f0" stroke-width="1.2"/>
<rect x="274" y="356" width="101" height="33.5" rx="0" fill="#efeffc" stroke="#a8a070" stroke-width="1"/>
<polygon points="290,410.3 323.75,406.5 357.5,410.3 357.9,419 357.5,427.7 323.75,431.5 290,427.7 289.6,419" fill="#fde8e6" stroke="#a8a070" stroke-width="1"/>
<rect x="262" y="448" width="125" height="17" rx="0" fill="#f0f2fe" stroke="#5cc4f6" stroke-width="1.1"/>
<rect x="430" y="431.7" width="148" height="25" rx="0" fill="#f0f2fe" stroke="#5cc4f6" stroke-width="1.1"/>
<polygon points="478,477.3 504.35,473.7 530.7,477.3 531.1,486.1 530.7,494.9 504.35,498.5 478,494.9 477.6,486.1" fill="#fde8e6" stroke="#48bcf4" stroke-width="1.1"/>
<rect x="470.7" y="515.7" width="66.3" height="17" rx="0" fill="#f0f2fe" stroke="#5cc4f6" stroke-width="1.1"/>
<rect x="463" y="549" width="81" height="16.7" rx="8.3" fill="#f2faff" stroke="#48bcf4" stroke-width="1.2"/>
</svg>
<span id="t115" style="left:66px;top:26.1px;font:normal 7.7px/10px 'Liberation Sans',Arial,sans-serif;color:#1c30e8;letter-spacing:-0.02px;">regexp_compile</span>
<span id="t116" style="left:39px;top:64px;font:normal 7.7px/10px 'Liberation Sans',Arial,sans-serif;color:#1c30e8;word-spacing:1.31px;letter-spacing:0.14px;">if( !JS_InstanceOf( cx, obj,</span>
<span id="t117" style="left:53px;top:72.1px;font:normal 7.7px/10px 'Liberation Sans',Arial,sans-serif;color:#1c30e8;word-spacing:0.64px;letter-spacing:0.08px;">&amp;js_RegExpClass, argv ) )</span>
<span id="t118" style="left:159px;top:62.7px;font:normal 7.7px/10px 'Liberation Sans',Arial,sans-serif;color:#1c30e8;word-spacing:0.17px;letter-spacing:0.04px;">! ^0</span>
<span id="t119" style="left:99px;top:90.5px;font:normal 7.7px/10px 'Liberation Sans',Arial,sans-serif;color:#1c30e8;letter-spacing:-0.46px;">!0</span>
<span id="t120" style="left:61.5px;top:110.3px;font:normal 7.7px/10px 'Liberation Sans',Arial,sans-serif;color:#1c30e8;word-spacing:0.48px;letter-spacing:0.03px;">return JS_FALSE;</span>
<span id="t121" style="left:48px;top:145.7px;font:normal 7.7px/10px 'Liberation Sans',Arial,sans-serif;color:#1c30e8;word-spacing:0.19px;letter-spacing:0.03px;">opt = NULL;</span>
<span id="t122" style="left:48px;top:158.5px;font:normal 7.7px/10px 'Liberation Sans',Arial,sans-serif;color:#1c30e8;word-spacing:0.47px;letter-spacing:0.06px;">JS_LOCK_OBJ( cx, obj );</span>
<span id="t123" style="left:65.5px;top:198.7px;font:normal 7.7px/10px 'Liberation Sans',Arial,sans-serif;color:#1c30e8;word-spacing:1.04px;letter-spacing:0.28px;">if( argc == 0 )</span>
<span id="t124" style="left:132px;top:192.8px;font:normal 7.7px/10px 'Liberation Sans',Arial,sans-serif;color:#1c30e8;letter-spacing:-0.57px;">!=</span>
<span id="t125" style="left:99px;top:217px;font:normal 7.7px/10px 'Liberation Sans',Arial,sans-serif;color:#1c30e8;letter-spacing:-0.74px;">==</span>
<span id="t126" style="left:37px;top:236.2px;font:normal 7.7px/10px 'Liberation Sans',Arial,sans-serif;color:#1c30e8;word-spacing:1.03px;letter-spacing:0.07px;">str = cx-&gt;runtime-&gt;emptyString;</span>
<span id="t127" style="left:204px;top:219.7px;font:normal 7.7px/10px 'Liberation Sans',Arial,sans-serif;color:#1c30e8;word-spacing:1.1px;letter-spacing:0.2px;">str = js_ValueToString( cx, argv[ 0 ] )</span>
<span id="t128" style="left:213.5px;top:228.5px;font:normal 7.7px/10px 'Liberation Sans',Arial,sans-serif;color:#1c30e8;">;</span>
<span id="t129" style="left:257.5px;top:266px;font:normal 7.7px/10px 'Liberation Sans',Arial,sans-serif;color:#1c30e8;word-spacing:1.52px;letter-spacing:0.3px;">if( !str )</span>
<span id="t130" style="left:305px;top:260.5px;font:normal 7.7px/10px 'Liberation Sans',Arial,sans-serif;color:#1c30e8;word-spacing:0.6px;letter-spacing:0.12px;">! ^0.</span>
<span id="t131" style="left:279px;top:283.8px;font:normal 7.7px/10px 'Liberation Sans',Arial,sans-serif;color:#1c30e8;letter-spacing:-0.46px;">!0</span>
<span id="t132" style="left:244.5px;top:303.7px;font:normal 7.7px/10px 'Liberation Sans',Arial,sans-serif;color:#1c30e8;letter-spacing:-0.01px;">ok = JS_FALSE;</span>
<span id="t133" style="left:256.5px;top:337px;font:normal 7.7px/10px 'Liberation Sans',Arial,sans-serif;color:#1c30e8;word-spacing:1.04px;letter-spacing:0.12px;">goto out;</span>
<div style="left:357px;top:18px;width:9.6px;height:355px;background:#f8f7f3;"></div>
<div style="left:357.2px;top:19px;width:9.2px;height:9px;background:linear-gradient(135deg,#d6e2fd 0%,#bccdfa 60%,#aebff4 100%);border:1px solid #fff;border-radius:2px;box-shadow:inset 0 0 0 0.5px #a8bcf0;"></div>
<svg style="left:357.2px;top:19px" width="9.2" height="9" viewBox="587.2 235 9.2 9">
<polyline points="589.2,241 591.8,238 594.4,241" fill="none" stroke="#2c3c74" stroke-width="1.35" />
</svg>
<div style="left:357.2px;top:29px;width:9.2px;height:124.5px;background:linear-gradient(to right,#cfdcfd 0%,#c2d3fc 50%,#b4c6f6 100%);border:1px solid #fff;border-radius:2px;box-shadow:inset 0 0 0 0.5px #a0b4ec;"></div>
<div style="left:359.3px;top:88.75px;width:5px;height:1px;background:#8ea4dc;"></div>
<div style="left:359.3px;top:90.75px;width:5px;height:1px;background:#8ea4dc;"></div>
<div style="left:359.3px;top:92.75px;width:5px;height:1px;background:#8ea4dc;"></div>
<div style="left:357.2px;top:362.5px;width:9.2px;height:9px;background:linear-gradient(135deg,#d6e2fd 0%,#bccdfa 60%,#aebff4 100%);border:1px solid #fff;border-radius:2px;box-shadow:inset 0 0 0 0.5px #a8bcf0;"></div>
<svg style="left:357.2px;top:362.5px" width="9.2" height="9" viewBox="587.2 578.5 9.2 9">
<polyline points="589.2,581.5 591.8,584.5 594.4,581.5" fill="none" stroke="#2c3c74" stroke-width="1.35" />
</svg>
<div style="left:2.3px;top:373px;width:354.7px;height:8.6px;background:#f8f7f3;"></div>
<div style="left:2.8px;top:373.2px;width:8.7px;height:8.2px;background:linear-gradient(135deg,#d6e2fd 0%,#bccdfa 60%,#aebff4 100%);border:1px solid #fff;border-radius:2px;box-shadow:inset 0 0 0 0.5px #a8bcf0;"></div>
<svg style="left:2.8px;top:373.2px" width="8.7" height="8.2" viewBox="232.8 589.2 8.7 8.2">
<polyline points="238.65,590.7 235.65,593.3 238.65,595.9" fill="none" stroke="#2c3c74" stroke-width="1.35" />
</svg>
<div style="left:44px;top:373.2px;width:141px;height:8.2px;background:linear-gradient(to bottom,#cfdcfd 0%,#c2d3fc 50%,#b4c6f6 100%);border:1px solid #fff;border-radius:2px;box-shadow:inset 0 0 0 0.5px #a0b4ec;"></div>
<div style="left:112px;top:374.8px;width:1px;height:5px;background:#8ea4dc;"></div>
<div style="left:114px;top:374.8px;width:1px;height:5px;background:#8ea4dc;"></div>
<div style="left:116px;top:374.8px;width:1px;height:5px;background:#8ea4dc;"></div>
<div style="left:347px;top:373.2px;width:9px;height:8.2px;background:linear-gradient(135deg,#d6e2fd 0%,#bccdfa 60%,#aebff4 100%);border:1px solid #fff;border-radius:2px;box-shadow:inset 0 0 0 0.5px #a8bcf0;"></div>
<svg style="left:347px;top:373.2px" width="9" height="8.2" viewBox="577 589.2 9 8.2">
<polyline points="580,590.7 583,593.3 580,595.9" fill="none" stroke="#2c3c74" stroke-width="1.35" />
</svg>
<div style="left:357px;top:373px;width:9.6px;height:8.6px;background:#ece9d8;"></div>
</div>
</body></html>
